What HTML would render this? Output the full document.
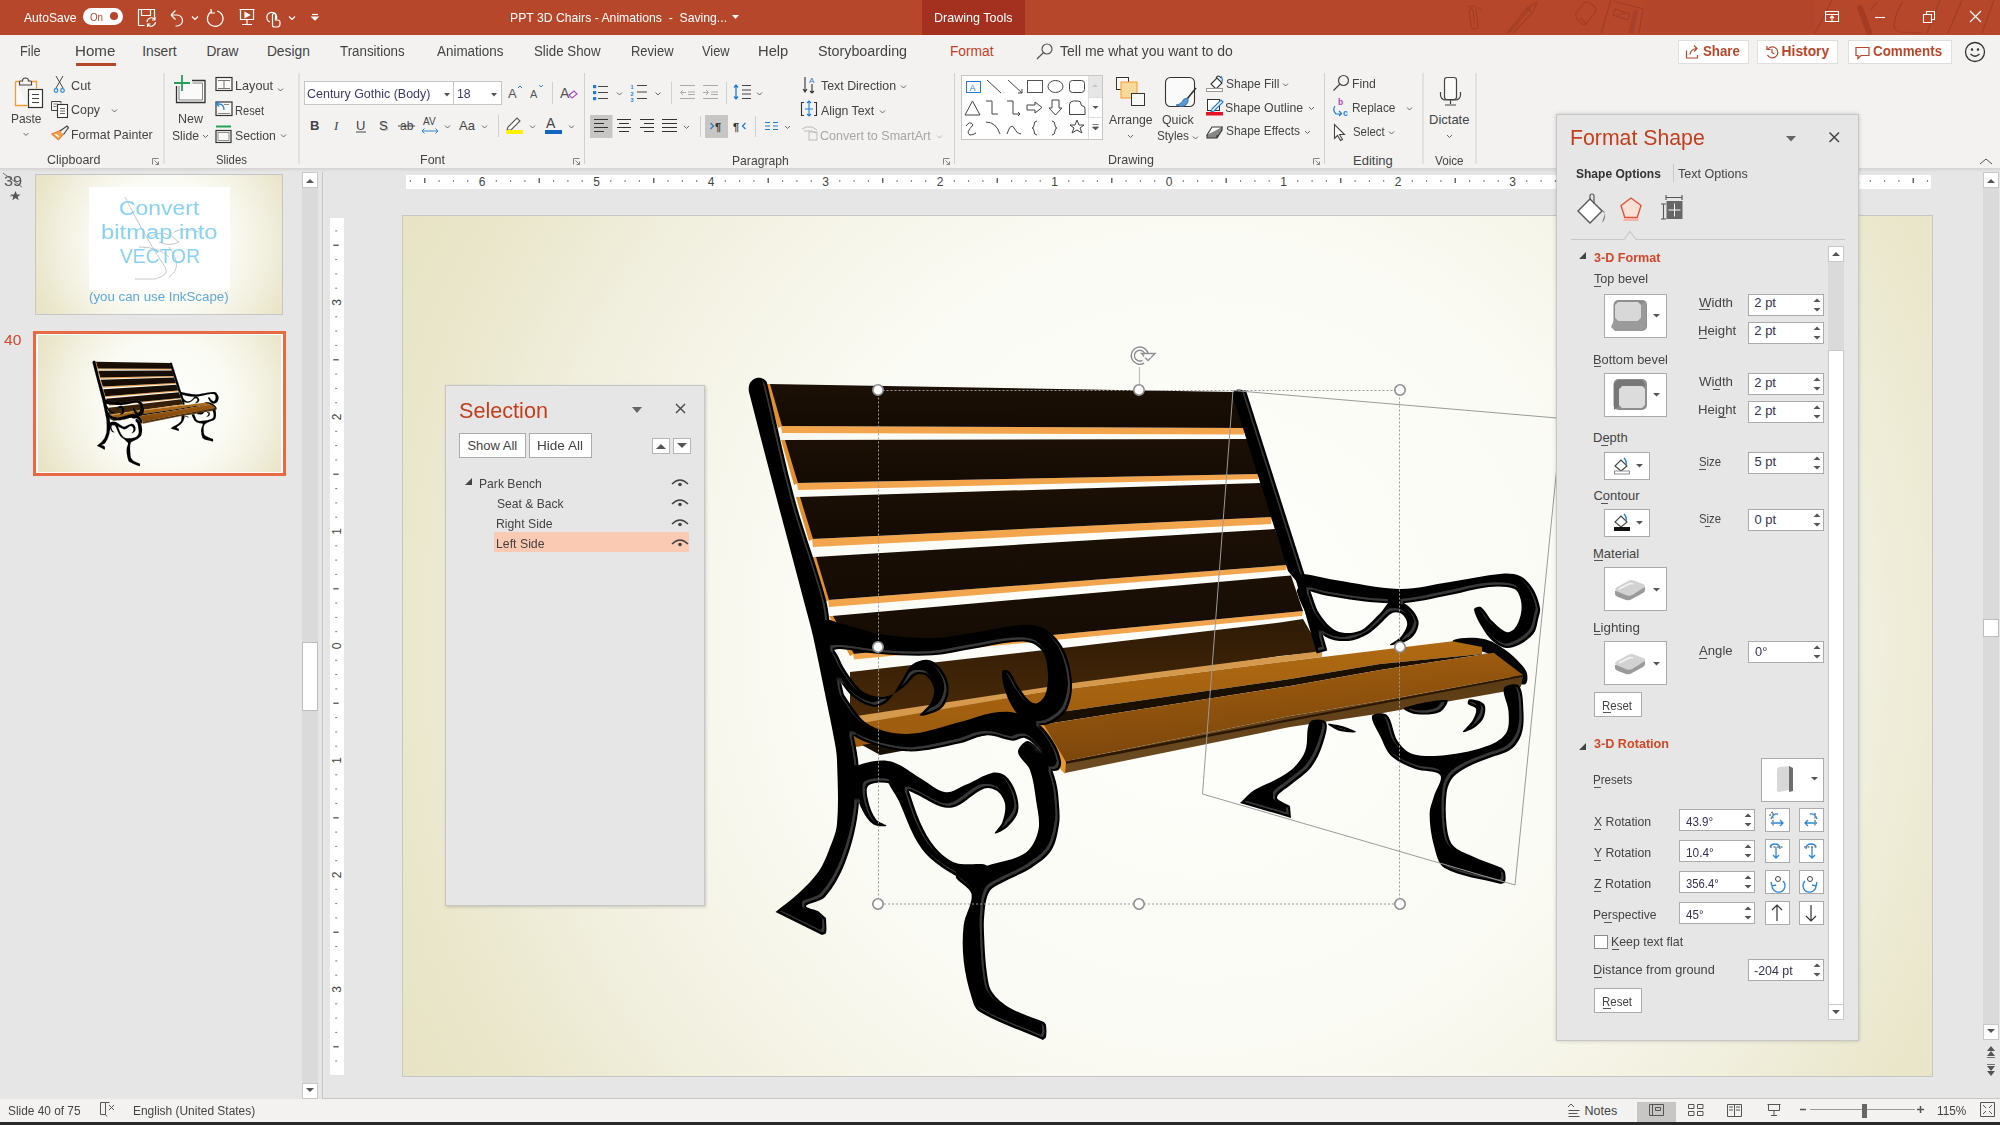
<!DOCTYPE html>
<html><head><meta charset="utf-8">
<style>
*{box-sizing:border-box;margin:0;padding:0}
html,body{width:2000px;height:1125px;overflow:hidden;background:#E6E6E6;font-family:"Liberation Sans",sans-serif;color:#444;position:relative}
.a{position:absolute;white-space:nowrap}
svg.a{overflow:visible}
</style></head><body>
<!-- p_title -->
<div class="a" style="left:0;top:0;width:2000px;height:35px;background:#B7472A"></div><div class="a" style="left:922px;top:0;width:103px;height:35px;background:#A4301F"></div><div class="a" style="left:1644px;top:0;width:170px;height:31px;background:#B2452A"></div><svg class="a" style="left:0;top:0" width="2000" height="35" fill="none" stroke="#A13D25" stroke-width="1.2">
<path d="M1472 9 q-2 -3 1 -3 q3 0 3 3 l2 16 q0 4 -3 4 q-4 0 -4 -4 l-2 -14 q0 -2 2 -2 q2 0 2 2 l1.5 12"/>
<path d="M1467 7 l3 -1 M1478 8 l4 2"/>
<path d="M1537 2 l-4 10 l-20 21 M1537 2 l-10 6 l-20 25 M1531 7 l-22 26 M1527 8 l4 4"/>
<path d="M1576 13 l8 -10 q3 -2 6 0 l5 4 q2 2 0 5 l-8 11 q-2 2 -5 1 l-5 -5 q-2 -3 -1 -6z M1580 18 l7 6"/>
<path d="M1611 0 l-10 33 M1613 1 l30 8 l-4 24 M1615 9 l15 5 l-2 6 l-15 -5z M1617 15 l10 -2"/>
<path d="M1636 10 l-5 23" stroke-width="5" stroke="#A8402A"/>
<path d="M1832 0 l-17 33 M1903 2 q-7 8 -9 23 q0 5 6 7 l22 1 M1940 0 l-13 33 M1962 0 l-14 33 M1994 0 l-12 33 M1877 2 l-6 8"/>
<path d="M1860 8 l9 24" stroke-width="6" stroke="#A53B22" stroke-linecap="round"/>
</svg><div class="a" style="left:24.0px;top:10.5px;font-size:13.5px;line-height:1;color:#fff;transform:scaleX(0.898);transform-origin:0 0;">AutoSave</div>
<div class="a" style="left:83px;top:8px;width:40px;height:17px;border-radius:9px;background:#fff"></div><div class="a" style="left:89.6px;top:12.1px;font-size:10.5px;line-height:1;color:#B7472A;transform:scaleX(0.933);transform-origin:0 0;">On</div>
<div class="a" style="left:110px;top:12px;width:8px;height:8px;border-radius:4px;background:#B7472A"></div><svg class="a" style="left:130px;top:0" width="200" height="35" fill="none" stroke="#fff" stroke-width="1.2">
<path d="M8.5 25.5 v-16 h16 v8 M8.5 25.5 h6 M11.5 9.5 v6 h9 v-6"/>
<path d="M17 22 a4.5 4.5 0 0 1 8 -2.5 M25 17 v3 h-3 M25.5 22 a4.5 4.5 0 0 1 -8 2.5 M17.5 27 v-3 h3"/>
<path d="M41 15 h6 a5.5 5.5 0 0 1 0 11 h-1.5 M41 15 l4.5 -4.5 M41 15 l4.5 4.5"/>
<path d="M62 16.5 l3 3 l3 -3"/>
<path d="M82 11.5 a7.8 7.8 0 1 0 5 -0.5 M81 9 v4 h4"/>
<path d="M109.5 9.5 h15 M110.5 9.5 v10 h13 v-10 M117 19.5 v5 M112 24.5 h10"/>
<path d="M115 12.5 v5 l4.5 -2.5 z" fill="#fff"/>
<path d="M140 22 a5 5 0 1 1 6.5 -3 M142.5 25 v-10 a1.5 1.5 0 0 1 3 0 v5 h2 a2.5 2.5 0 0 1 2.5 2.5 v1.5 a3 3 0 0 1 -3 3 h-2.5 a2 2 0 0 1 -2 -2z"/>
<path d="M159 16.5 l3 3 l3 -3"/>
<path d="M182 14.5 h6"/><path d="M182 17 h6 l-3 3z" fill="#fff"/>
</svg><div class="a" style="left:510.0px;top:10.5px;font-size:13.5px;line-height:1;color:#fff;transform:scaleX(0.905);transform-origin:0 0;white-space:pre;">PPT 3D Chairs - Animations  -  Saving...</div>
<svg class="a" style="left:731px;top:14px" width="10" height="6"><path d="M1 1 h7 l-3.5 4 z" fill="#fff"/></svg><div class="a" style="left:934.0px;top:11.0px;font-size:13px;line-height:1;color:#fff;transform:scaleX(0.964);transform-origin:0 0;">Drawing Tools</div>
<svg class="a" style="left:1820px;top:0" width="180" height="35" fill="none" stroke="#fff" stroke-width="1.1">
<path d="M5.5 11.5 h13 v10 h-13 z M5.5 14.5 h13 M12 21 v-5 M10 18 l2 -2 l2 2"/>
<path d="M55 17.5 h10"/>
<path d="M103.5 14.5 h8 v8 h-8 z M106.5 14.5 v-3 h8 v8 h-3"/>
<path d="M150 11 l11 11 M161 11 l-11 11"/>
</svg><div class="a" style="left:0;top:35px;width:2000px;height:134px;background:#F3F2F1"></div><div class="a" style="left:20.0px;top:45.3px;font-size:13.8px;line-height:1;color:#444;transform:scaleX(0.927);transform-origin:0 0;">File</div>
<div class="a" style="left:74.8px;top:45.3px;font-size:13.8px;line-height:1;color:#444;transform:scaleX(1.098);transform-origin:0 0;">Home</div>
<div class="a" style="left:142.2px;top:45.3px;font-size:13.8px;line-height:1;color:#444;">Insert</div>
<div class="a" style="left:206.4px;top:45.3px;font-size:13.8px;line-height:1;color:#444;">Draw</div>
<div class="a" style="left:266.9px;top:45.3px;font-size:13.8px;line-height:1;color:#444;">Design</div>
<div class="a" style="left:339.7px;top:45.3px;font-size:13.8px;line-height:1;color:#444;transform:scaleX(0.966);transform-origin:0 0;">Transitions</div>
<div class="a" style="left:436.5px;top:45.3px;font-size:13.8px;line-height:1;color:#444;transform:scaleX(0.974);transform-origin:0 0;">Animations</div>
<div class="a" style="left:534.4px;top:45.3px;font-size:13.8px;line-height:1;color:#444;transform:scaleX(0.964);transform-origin:0 0;">Slide Show</div>
<div class="a" style="left:630.5px;top:45.3px;font-size:13.8px;line-height:1;color:#444;transform:scaleX(0.940);transform-origin:0 0;">Review</div>
<div class="a" style="left:702.4px;top:45.3px;font-size:13.8px;line-height:1;color:#444;transform:scaleX(0.929);transform-origin:0 0;">View</div>
<div class="a" style="left:757.8px;top:45.3px;font-size:13.8px;line-height:1;color:#444;transform:scaleX(1.067);transform-origin:0 0;">Help</div>
<div class="a" style="left:817.9px;top:45.3px;font-size:13.8px;line-height:1;color:#444;transform:scaleX(1.037);transform-origin:0 0;">Storyboarding</div>
<div class="a" style="left:949.9px;top:45.3px;font-size:13.8px;line-height:1;color:#C43E1C;">Format</div>
<div class="a" style="left:76px;top:63px;width:40px;height:3px;background:#B7472A"></div><svg class="a" style="left:1035px;top:42px" width="20" height="20" fill="none" stroke="#555" stroke-width="1.2"><circle cx="12" cy="7" r="5"/><path d="M8.5 10.5 L2 17"/></svg><div class="a" style="left:1059.7px;top:45.3px;font-size:13.8px;line-height:1;color:#444;transform:scaleX(1.015);transform-origin:0 0;">Tell me what you want to do</div>
<div class="a" style="left:1678px;top:40px;width:71px;height:24px;background:#fff;border:1px solid #E1DFDD"></div><div class="a" style="left:1757px;top:40px;width:81px;height:24px;background:#fff;border:1px solid #E1DFDD"></div><div class="a" style="left:1848px;top:40px;width:104px;height:24px;background:#fff;border:1px solid #E1DFDD"></div><div class="a" style="left:1702.6px;top:45.3px;font-size:13.8px;line-height:1;color:#B7472A;font-weight:bold;transform:scaleX(0.961);transform-origin:0 0;">Share</div>
<div class="a" style="left:1781.6px;top:45.3px;font-size:13.8px;line-height:1;color:#B7472A;font-weight:bold;">History</div>
<div class="a" style="left:1872.5px;top:45.3px;font-size:13.8px;line-height:1;color:#B7472A;font-weight:bold;transform:scaleX(0.969);transform-origin:0 0;">Comments</div>
<svg class="a" style="left:1680px;top:40px" width="280" height="24" fill="none" stroke="#B7472A" stroke-width="1.2">
<path d="M6.5 10.5 v7.5 h11 v-3 M10 14.5 q1 -6 7 -6 M14 5.5 l3 3 l-3 3"/>
<path d="M88 9 a5.5 5.5 0 1 1 -0.5 6 M87 6 v3.5 h3.5 M92 9 v3.5 l2.5 1.5"/>
<path d="M176 7.5 h13 v8 h-8 l-3 3 v-3 h-2 z"/>
</svg><svg class="a" style="left:1962px;top:40px" width="26" height="24" fill="none" stroke="#333" stroke-width="1.3"><circle cx="13" cy="12" r="9.5"/><circle cx="10" cy="9.5" r="0.6" fill="#333"/><circle cx="16" cy="9.5" r="0.6" fill="#333"/><path d="M8.5 14 q4.5 4.5 9 0"/></svg>
<!-- p_ribbon -->
<div class="a" style="left:11.0px;top:112.6px;font-size:12.8px;line-height:1;color:#444;transform:scaleX(0.932);transform-origin:0 0;">Paste</div>
<div class="a" style="left:70.9px;top:78.8px;font-size:13px;line-height:1;color:#444;transform:scaleX(0.974);transform-origin:0 0;">Cut</div>
<div class="a" style="left:70.9px;top:103.4px;font-size:13px;line-height:1;color:#444;transform:scaleX(0.959);transform-origin:0 0;">Copy</div>
<div class="a" style="left:70.5px;top:128.1px;font-size:13px;line-height:1;color:#444;transform:scaleX(0.950);transform-origin:0 0;">Format Painter</div>
<div class="a" style="left:46.9px;top:153.0px;font-size:13px;line-height:1;color:#444;transform:scaleX(0.960);transform-origin:0 0;">Clipboard</div>
<div class="a" style="left:178.0px;top:112.2px;font-size:13px;line-height:1;color:#444;transform:scaleX(0.959);transform-origin:0 0;">New</div>
<div class="a" style="left:171.5px;top:129.4px;font-size:13px;line-height:1;color:#444;transform:scaleX(0.937);transform-origin:0 0;">Slide</div>
<div class="a" style="left:235.0px;top:78.8px;font-size:13px;line-height:1;color:#444;transform:scaleX(0.976);transform-origin:0 0;">Layout</div>
<div class="a" style="left:235.1px;top:103.5px;font-size:13px;line-height:1;color:#444;transform:scaleX(0.853);transform-origin:0 0;">Reset</div>
<div class="a" style="left:234.9px;top:128.6px;font-size:13px;line-height:1;color:#444;transform:scaleX(0.942);transform-origin:0 0;">Section</div>
<div class="a" style="left:215.5px;top:152.9px;font-size:13px;line-height:1;color:#444;transform:scaleX(0.872);transform-origin:0 0;">Slides</div>
<div class="a" style="left:304px;top:81px;width:198px;height:24px;background:#fff;border:1px solid #C8C6C4"></div><div class="a" style="left:453px;top:82px;width:1px;height:22px;background:#C8C6C4"></div><div class="a" style="left:306.9px;top:86.5px;font-size:13px;line-height:1;color:#3B3B6A;transform:scaleX(0.960);transform-origin:0 0;">Century Gothic (Body)</div>
<div class="a" style="left:456.6px;top:86.5px;font-size:13px;line-height:1;color:#3B3B6A;transform:scaleX(0.943);transform-origin:0 0;">18</div>
<div class="a" style="left:420.0px;top:153.1px;font-size:13px;line-height:1;color:#444;transform:scaleX(0.964);transform-origin:0 0;">Font</div>
<div class="a" style="left:820.8px;top:78.7px;font-size:13px;line-height:1;color:#444;transform:scaleX(0.953);transform-origin:0 0;">Text Direction</div>
<div class="a" style="left:821.0px;top:103.8px;font-size:13px;line-height:1;color:#444;transform:scaleX(0.946);transform-origin:0 0;">Align Text</div>
<div class="a" style="left:820.4px;top:128.9px;font-size:13px;line-height:1;color:#A6A6A6;transform:scaleX(0.964);transform-origin:0 0;">Convert to SmartArt</div>
<div class="a" style="left:732.0px;top:153.7px;font-size:13px;line-height:1;color:#444;transform:scaleX(0.935);transform-origin:0 0;">Paragraph</div>
<div class="a" style="left:961px;top:75px;width:142px;height:65px;background:#fff;border:1px solid #C8C6C4"></div><div class="a" style="left:1088px;top:76px;width:1px;height:63px;background:#E1DFDD"></div><div class="a" style="left:1089px;top:76px;width:13px;height:21px;background:#E6E6E6"></div><div class="a" style="left:1109.0px;top:112.9px;font-size:13px;line-height:1;color:#444;transform:scaleX(0.942);transform-origin:0 0;">Arrange</div>
<div class="a" style="left:1162.4px;top:112.9px;font-size:13px;line-height:1;color:#444;transform:scaleX(0.950);transform-origin:0 0;">Quick</div>
<div class="a" style="left:1156.5px;top:128.9px;font-size:13px;line-height:1;color:#444;transform:scaleX(0.902);transform-origin:0 0;">Styles</div>
<div class="a" style="left:1225.5px;top:76.8px;font-size:13px;line-height:1;color:#444;transform:scaleX(0.923);transform-origin:0 0;">Shape Fill</div>
<div class="a" style="left:1225.4px;top:100.5px;font-size:13px;line-height:1;color:#444;transform:scaleX(0.948);transform-origin:0 0;">Shape Outline</div>
<div class="a" style="left:1225.5px;top:124.3px;font-size:13px;line-height:1;color:#444;transform:scaleX(0.916);transform-origin:0 0;">Shape Effects</div>
<div class="a" style="left:1108.0px;top:153.4px;font-size:13px;line-height:1;color:#444;transform:scaleX(0.962);transform-origin:0 0;">Drawing</div>
<div class="a" style="left:1352.0px;top:77.4px;font-size:13px;line-height:1;color:#444;transform:scaleX(0.940);transform-origin:0 0;">Find</div>
<div class="a" style="left:1352.1px;top:101.4px;font-size:13px;line-height:1;color:#444;transform:scaleX(0.911);transform-origin:0 0;">Replace</div>
<div class="a" style="left:1352.5px;top:125.4px;font-size:13px;line-height:1;color:#444;transform:scaleX(0.875);transform-origin:0 0;">Select</div>
<div class="a" style="left:1353.0px;top:153.5px;font-size:13px;line-height:1;color:#444;">Editing</div>
<div class="a" style="left:1429.0px;top:112.8px;font-size:13px;line-height:1;color:#444;">Dictate</div>
<div class="a" style="left:1434.9px;top:153.5px;font-size:13px;line-height:1;color:#444;transform:scaleX(0.899);transform-origin:0 0;">Voice</div>
<svg class="a" style="left:0;top:0" width="2000" height="170"><path d="M164 73 V164" stroke="#D2D0CE" stroke-width="1"/><path d="M299 73 V164" stroke="#D2D0CE" stroke-width="1"/><path d="M584.5 73 V164" stroke="#D2D0CE" stroke-width="1"/><path d="M954.5 73 V164" stroke="#D2D0CE" stroke-width="1"/><path d="M1324.5 73 V164" stroke="#D2D0CE" stroke-width="1"/><path d="M1423 73 V164" stroke="#D2D0CE" stroke-width="1"/><path d="M1476 73 V164" stroke="#D2D0CE" stroke-width="1"/><path d="M152.5 164.5 v-6 h6 M154.5 160.5 l4 4 M158.5 161.5 v3 h-3" stroke="#777" fill="none" stroke-width="0.9"/><path d="M573.5 164.5 v-6 h6 M575.5 160.5 l4 4 M579.5 161.5 v3 h-3" stroke="#777" fill="none" stroke-width="0.9"/><path d="M943.5 164.5 v-6 h6 M945.5 160.5 l4 4 M949.5 161.5 v3 h-3" stroke="#777" fill="none" stroke-width="0.9"/><path d="M1313.5 164.5 v-6 h6 M1315.5 160.5 l4 4 M1319.5 161.5 v3 h-3" stroke="#777" fill="none" stroke-width="0.9"/><path d="M15.5 81.5 h5 M30.5 81.5 h6 v7 M15.5 81.5 v24 h12" stroke="#F39C30" fill="#FAFAFA" stroke-width="1.3"/><path d="M19.5 85 v-3 a1 1 0 0 1 1 -1 h2 a3 3 0 0 1 6 0 h2 a1 1 0 0 1 1 1 v3 z" stroke="#444" fill="#F3F2F1" stroke-width="1.1"/><rect x="28.5" y="89.5" width="14" height="18" fill="#fff" stroke="#333" stroke-width="1.2"/><path d="M32 94.5 h7 M32 98.5 h7 M32 102.5 h7" stroke="#444" stroke-width="1"/><path d="M23.5 133 l2.5 2.5 l2.5 -2.5" stroke="#666" fill="none" stroke-width="1"/><path d="M56 76 l7 12 M63 76 l-7 12" stroke="#444" stroke-width="1" fill="none"/><circle cx="56" cy="90.5" r="1.8" stroke="#2B88D8" fill="none" stroke-width="1.2"/><circle cx="62.5" cy="90.5" r="1.8" stroke="#2B88D8" fill="none" stroke-width="1.2"/><path d="M60 110.5 h-8.5 v-9 h9.5 v2" stroke="#444" fill="none" stroke-width="1"/><rect x="57.5" y="104.5" width="10" height="13" fill="#fff" stroke="#333" stroke-width="1.1"/><path d="M60 108.5 h5 M60 111 h5 M60 113.5 h5" stroke="#555" stroke-width="0.9"/><path d="M53.5 104 h4 M53.5 106.5 h3" stroke="#666" stroke-width="0.8"/><path d="M112 109.5 l2.5 2.5 l2.5 -2.5" stroke="#666" fill="none" stroke-width="1"/><path d="M51.5 134 l7 6 l6 -7 l-3 -3 z" fill="#F6A04C" stroke="#E8761E" stroke-width="1"/><path d="M55 134 l4 3" stroke="#fff" stroke-width="1.5"/><path d="M60 131 l7 -5 l1.5 1.5 l-5 7" stroke="#444" fill="#F3F2F1" stroke-width="1.1"/><path d="M176.5 86 v16.5 h28.5 v-22 h-13" stroke="#333" fill="#FAFAFA" stroke-width="1.3"/><path d="M179 86 v14 h23.5 v-17 h-10" stroke="#777" fill="none" stroke-width="0.9"/><path d="M174 83 h16 M182 75 v16" stroke="#22A356" stroke-width="1.8"/><path d="M203 135 l2.5 2.5 l2.5 -2.5" stroke="#666" fill="none" stroke-width="1"/><rect x="216" y="77.5" width="16" height="13" fill="#F8F8F8" stroke="#333" stroke-width="1.2"/><path d="M218 80.5 h12 M218 88.5 h12 M224 80.5 v8" stroke="#777" stroke-width="1"/><rect x="216" y="102" width="16" height="13.5" fill="#F8F8F8" stroke="#333" stroke-width="1.2"/><path d="M218 113.5 h12 M224 104.5 h5" stroke="#888" stroke-width="1"/><path d="M224 110 q0 -6 -5 -6 h-2 M219 101.5 l-2.5 2.5 l2.5 2.5" stroke="#2B88D8" fill="none" stroke-width="1.3"/><path d="M216 126.5 h15" stroke="#22A356" stroke-width="2"/><rect x="216" y="130.5" width="15" height="12" fill="#F8F8F8" stroke="#333" stroke-width="1.2"/><rect x="218" y="132.5" width="11" height="8" fill="none" stroke="#777" stroke-width="0.8"/><path d="M278 88.5 l2.5 2.5 l2.5 -2.5" stroke="#666" fill="none" stroke-width="1"/><path d="M281 134.5 l2.5 2.5 l2.5 -2.5" stroke="#666" fill="none" stroke-width="1"/><path d="M444 93 h6 l-3 3.5z M491 93 h6 l-3 3.5z" fill="#555"/><text x="508" y="98" font-size="13" fill="#555" font-family="Liberation Sans">A</text><path d="M518 88 l2 -2 l2 2" stroke="#2B88D8" fill="none" stroke-width="1"/><text x="530" y="98" font-size="11" fill="#555" font-family="Liberation Sans">A</text><path d="M539 85 l2 2 l2 -2" stroke="#2B88D8" fill="none" stroke-width="1"/><path d="M552.5 82 V104" stroke="#D2D0CE"/><text x="560" y="98" font-size="14" fill="#555" font-family="Liberation Sans">A</text><path d="M569 95 l5 -4 l3 3 l-5 4 z" fill="#fff" stroke="#B146C2" stroke-width="1.2"/><text x="310" y="129.5" font-size="13" font-weight="bold" fill="#444" font-family="Liberation Sans">B</text><text x="334" y="129.5" font-size="13" font-style="italic" fill="#444" font-family="Liberation Serif">I</text><text x="356" y="129.5" font-size="13" fill="#444" font-family="Liberation Sans">U</text><path d="M356 132 h10" stroke="#444"/><text x="380" y="130.5" font-size="13" fill="#bbb" font-family="Liberation Sans">S</text><text x="379" y="129.5" font-size="13" fill="#444" font-family="Liberation Sans">S</text><text x="400" y="130" font-size="12" fill="#444" font-family="Liberation Sans">ab</text><path d="M398 126 h17" stroke="#444"/><text x="423" y="125" font-size="10" fill="#444" font-family="Liberation Sans">AV</text><path d="M422 131 h16 M424.5 128.5 l-2.5 2.5 l2.5 2.5 M435.5 128.5 l2.5 2.5 l-2.5 2.5" stroke="#2B88D8" fill="none" stroke-width="1"/><path d="M445 125.5 l2.5 2.5 l2.5 -2.5" stroke="#666" fill="none" stroke-width="1"/><text x="459" y="130" font-size="13" fill="#444" font-family="Liberation Sans">Aa</text><path d="M482 125.5 l2.5 2.5 l2.5 -2.5" stroke="#666" fill="none" stroke-width="1"/><path d="M498.5 115 V137" stroke="#D2D0CE"/><path d="M508 127 l9 -9 l3 3 l-9 9 l-4 0z" fill="#fff" stroke="#555" stroke-width="1.1"/><rect x="506" y="130" width="17" height="4" fill="#FFF100"/><path d="M530 125.5 l2.5 2.5 l2.5 -2.5" stroke="#666" fill="none" stroke-width="1"/><text x="546" y="128" font-size="14" fill="#444" font-family="Liberation Sans">A</text><rect x="545" y="130" width="17" height="4" fill="#1565C0"/><path d="M569 125.5 l2.5 2.5 l2.5 -2.5" stroke="#666" fill="none" stroke-width="1"/><rect x="593" y="85" width="3.2" height="3.2" fill="#1E7FD8"/><path d="M598 86.5 h10" stroke="#444" stroke-width="1"/><rect x="593" y="91" width="3.2" height="3.2" fill="#1E7FD8"/><path d="M598 92.5 h10" stroke="#444" stroke-width="1"/><rect x="593" y="97" width="3.2" height="3.2" fill="#1E7FD8"/><path d="M598 98.5 h10" stroke="#444" stroke-width="1"/><path d="M617 92.5 l2.5 2.5 l2.5 -2.5" stroke="#666" fill="none" stroke-width="1"/><text x="630.5" y="89" font-size="5.5" fill="#1E7FD8" font-family="Liberation Sans" font-weight="bold">1</text><text x="630.5" y="95.5" font-size="5.5" fill="#1E7FD8" font-family="Liberation Sans" font-weight="bold">2</text><text x="630.5" y="102" font-size="5.5" fill="#1E7FD8" font-family="Liberation Sans" font-weight="bold">3</text><path d="M637 85.5 h10 M637 92 h10 M637 98.5 h10" stroke="#444" stroke-width="1"/><path d="M655.5 92.5 l2.5 2.5 l2.5 -2.5" stroke="#666" fill="none" stroke-width="1"/><path d="M671.5 82 V104 M726.5 82 V104" stroke="#D2D0CE"/><path d="M680 85.5 h15 M688 92 h7 M688 94.5 h7 M680 98.5 h15 M681 92.5 h5 M683 90 l-2.5 2.5 l2.5 2.5" stroke="#AAA" fill="none" stroke-width="1"/><path d="M703 85.5 h15 M711 92 h7 M711 94.5 h7 M703 98.5 h15 M703 92.5 h5 M706 90 l2.5 2.5 l-2.5 2.5" stroke="#AAA" fill="none" stroke-width="1"/><path d="M736 85 v14 M734 87.5 l2 -2.5 l2 2.5 M734 96.5 l2 2.5 l2 -2.5" stroke="#1E7FD8" fill="none" stroke-width="1.3"/><path d="M742 85.5 h9 M742 90 h9 M742 94 h9 M742 98.5 h9" stroke="#444" stroke-width="1"/><path d="M757 92.5 l2.5 2.5 l2.5 -2.5" stroke="#666" fill="none" stroke-width="1"/><rect x="590" y="115" width="22.5" height="23" fill="#C8C6C4"/><rect x="705" y="115" width="23" height="23" fill="#C8C6C4"/><path d="M594 119.5 h14 M594 123.5 h10 M594 127.5 h14 M594 131.5 h10" stroke="#333" stroke-width="1"/><path d="M617 119.5 h14 M619 123.5 h10 M617 127.5 h14 M619 131.5 h10" stroke="#333" stroke-width="1"/><path d="M640 119.5 h14 M644 123.5 h10 M640 127.5 h14 M644 131.5 h10" stroke="#333" stroke-width="1"/><path d="M662 119.5 h15 M662 123.5 h15 M662 127.5 h15 M662 131.5 h15" stroke="#333" stroke-width="1"/><path d="M684 126 l2.5 2.5 l2.5 -2.5" stroke="#666" fill="none" stroke-width="1"/><path d="M700.5 116 V137 M755.5 116 V137" stroke="#D2D0CE"/><path d="M710.5 123 l3 3 l-3 3" stroke="#1E7FD8" fill="none" stroke-width="1.3"/><text x="715" y="131" font-size="11" fill="#333" font-family="Liberation Sans" font-weight="bold">¶</text><text x="733" y="131" font-size="11" fill="#333" font-family="Liberation Sans" font-weight="bold">¶</text><path d="M745.5 123 l-3 3 l3 3" stroke="#1E7FD8" fill="none" stroke-width="1.3"/><path d="M765 122.5 h5 M765 126 h5 M765 129.5 h5 M773 122.5 h5 M773 126 h5 M773 129.5 h5" stroke="#1E7FD8" stroke-width="1.2"/><path d="M785 126 l2.5 2.5 l2.5 -2.5" stroke="#666" fill="none" stroke-width="1"/><path d="M805 77 v15 M803 89 l2 3 l2 -3 M812 84 v9 M810 91 l2 2 l2 -2" stroke="#333" fill="none" stroke-width="1.1"/><text x="809" y="83" font-size="8" fill="#1E7FD8" font-family="Liberation Sans">A</text><path d="M804 102.5 h-2.5 v13 h2.5 M814 102.5 h2.5 v13 h-2.5" stroke="#333" fill="none" stroke-width="1.1"/><path d="M809 101 v15 M807 103 l2 -2 l2 2 M807 114 l2 2 l2 -2 M805 109 h8" stroke="#1E7FD8" fill="none" stroke-width="1.1"/><path d="M802 129 l4 -2 h6 l5 3 M804 131 h8 l4 2" stroke="#BBB" fill="none" stroke-width="1"/><rect x="809" y="132" width="8" height="8" fill="none" stroke="#BBB"/><path d="M901 85.5 l2.5 2.5 l2.5 -2.5" stroke="#666" fill="none" stroke-width="1"/><path d="M880 110.5 l2.5 2.5 l2.5 -2.5" stroke="#666" fill="none" stroke-width="1"/><path d="M937 135.5 l2.5 2.5 l2.5 -2.5" stroke="#BBB" fill="none" stroke-width="1"/><path d="M1092 87 l3 -3 l3 3z" fill="#C8C8C8"/><path d="M1089 97.5 h13 M1089 117.5 h13" stroke="#E1DFDD"/><path d="M1092.5 106 h6 l-3 3z" fill="#555"/><path d="M1092.5 124.5 h6 M1092.5 127 h6 l-3 3z" stroke="#555" fill="#555" stroke-width="0.8"/><g stroke="#444" fill="none" stroke-width="1"><rect x="966.5" y="81.5" width="14" height="11" stroke="#1E7FD8"/><text x="969.5" y="91" font-size="9" fill="#1E7FD8" stroke="none" font-family="Liberation Sans">A</text><path d="M987 80 l14 13 M1008 80 l14 13 M1022 93 v-4 M1022 93 h-4"/><rect x="1027.5" y="80.5" width="15" height="12" stroke="#555"/><ellipse cx="1055.5" cy="86.5" rx="7.5" ry="6"/><rect x="1069.5" y="80.5" width="15" height="12" rx="3"/><path d="M965 115 l7.5 -14 l7.5 14 z M986 101 h6 v13 h6 M1007 101 h6 v13 h7 M1018 112 l2 2 l-2 2"/><path d="M1027 105 h8 v-3 l7 5.5 l-7 5.5 v-3 h-8 z M1052 100 h7 v8 h3 l-6.5 7 l-6.5 -7 h3 z M1069.5 114.5 v-9.5 q0 -4 4 -4 h4.5 q3 0 3 3 q0 2 2 2 q2 0 2 3 v5.5 z"/><path d="M966 126 q4 -6 7 -1 q-8 8 -3 10 q3 0 6 -2 M986 122 q10 0 14 12 M1007 134 q4 -12 7 -6 q3 6 7 6 M1037 121 q-3 0 -3 4 q0 3 -2 3 q2 0 2 3 q0 4 3 4 M1052 121 q3 0 3 4 q0 3 2 3 q-2 0 -2 3 q0 4 -3 4 M1077 120 l2 5 h5 l-4 3 l2 5 l-5 -3 l-5 3 l2 -5 l-4 -3 h5 z"/></g><rect x="1116.5" y="77.5" width="12" height="12" fill="#F8F8F8" stroke="#333"/><rect x="1121" y="82" width="16" height="16" fill="#F9D89C" stroke="#F39C30"/><rect x="1131.5" y="93.5" width="13" height="12" fill="#F8F8F8" stroke="#333"/><path d="M1128 135 l2.5 2.5 l2.5 -2.5" stroke="#666" fill="none" stroke-width="1"/><rect x="1165.5" y="77.5" width="29" height="29" rx="5" fill="#FAFAFA" stroke="#333" stroke-width="1.1"/><path d="M1196 88 l-9 11" stroke="#333" stroke-width="1.6"/><path d="M1188 98 q-5 0 -6 4 q-3 3 -6 3 q6 3 10 0 q3 -3 2 -7z" fill="#5B9BD5" stroke="#2B6CB0" stroke-width="0.8"/><path d="M1193 136.5 l2.5 2.5 l2.5 -2.5" stroke="#666" fill="none" stroke-width="1"/><path d="M1211 84 l6 -6 l5 5 l-6 6 z M1216 78 q2 -4 5 0" stroke="#333" fill="#fff" stroke-width="1.1"/><path d="M1221 76 q2 3 1 6" stroke="#1E7FD8" fill="none" stroke-width="1.3"/><rect x="1206.5" y="88.5" width="16" height="3" fill="#fff" stroke="#999"/><rect x="1207.5" y="99.5" width="12" height="11" fill="#fff" stroke="#333"/><path d="M1212 109 l9 -9 l2 2 l-9 9 l-3 1z" fill="#fff" stroke="#1E7FD8" stroke-width="1.2"/><rect x="1206" y="112" width="17" height="3.5" fill="#E81123"/><path d="M1207 135 l5 -8 h10 l-5 8 z" fill="#fff" stroke="#333" stroke-width="1.1"/><path d="M1207 135 v3 h10 l5 -8 v-3 M1217 135 v3" fill="#888" stroke="#333" stroke-width="1.1"/><path d="M1283 83.5 l2.5 2.5 l2.5 -2.5" stroke="#666" fill="none" stroke-width="1"/><path d="M1309 107 l2.5 2.5 l2.5 -2.5" stroke="#666" fill="none" stroke-width="1"/><path d="M1305 131 l2.5 2.5 l2.5 -2.5" stroke="#666" fill="none" stroke-width="1"/><circle cx="1343.5" cy="80.5" r="5" fill="none" stroke="#444" stroke-width="1.2"/><path d="M1340 84 l-6.5 6.5" stroke="#444" stroke-width="1.3"/><text x="1338" y="105" font-size="8.5" fill="#B146C2" font-family="Liberation Sans" font-weight="bold">b</text><text x="1343" y="116" font-size="8.5" fill="#1E7FD8" font-family="Liberation Sans" font-weight="bold">c</text><path d="M1335 106 q-3 4 1 8 h5 M1339 111 l2.5 2.5 l-2.5 2.5" stroke="#1E7FD8" fill="none" stroke-width="1.2"/><path d="M1334.5 124.5 v14 l3 -3 l3 5 l2 -1 l-3 -5 h5 z" fill="#fff" stroke="#444" stroke-width="1.1"/><path d="M1407 107.5 l2.5 2.5 l2.5 -2.5" stroke="#666" fill="none" stroke-width="1"/><path d="M1389 131.5 l2.5 2.5 l2.5 -2.5" stroke="#666" fill="none" stroke-width="1"/><rect x="1444.5" y="77.5" width="12" height="22" rx="2.5" fill="#FAFAFA" stroke="#444" stroke-width="1.2"/><path d="M1440.5 92 v3 a5 5 0 0 0 5 5 h10 a5 5 0 0 0 5 -5 v-3 M1450.5 100 v4 M1445 105 h11" stroke="#444" fill="none" stroke-width="1.2"/><path d="M1447 135 l2.5 2.5 l2.5 -2.5" stroke="#666" fill="none" stroke-width="1"/><path d="M1980 164 l6 -5 l6 5" stroke="#555" fill="none" stroke-width="1"/></svg><div class="a" style="left:0;top:168px;width:2000px;height:4px;background:linear-gradient(#D4D3D2,#E6E6E6)"></div>
<!-- p_left -->
<div class="a" style="left:302px;top:172px;width:16px;height:927px;background:#DADADA"></div><div class="a" style="left:302px;top:172px;width:16px;height:16px;background:#fff;border:1px solid #C8C8C8"></div><div class="a" style="left:302px;top:1083px;width:16px;height:16px;background:#fff;border:1px solid #C8C8C8"></div><div class="a" style="left:302px;top:642px;width:16px;height:69px;background:#fff;border:1px solid #BDBDBD"></div><svg class="a" style="left:302px;top:172px" width="16" height="926"><path d="M4 11 h8 l-4 -4z M4 916 h8 l-4 4z" fill="#555"/></svg><div class="a" style="left:322px;top:172px;width:1px;height:927px;background:#C6C6C6"></div><div class="a" style="left:3.9px;top:172.8px;font-size:15px;line-height:1;color:#555;transform:scaleX(1.093);transform-origin:0 0;">39</div>
<svg class="a" style="left:0;top:168px" width="30" height="40"><path d="M3 5 l19 14" stroke="#666" stroke-width="0.9"/><path d="M15.5 23 l1.5 3.5 h3.5 l-2.8 2.2 l1 3.6 l-3.2 -2.2 l-3.2 2.2 l1 -3.6 l-2.8 -2.2 h3.5z" fill="#555"/><path d="M10 28 h2" stroke="#777" stroke-width="0.8"/></svg><div class="a" style="left:3.7px;top:332.2px;font-size:15px;line-height:1;color:#D24726;transform:scaleX(1.043);transform-origin:0 0;">40</div>
<div class="a" style="left:35px;top:174px;width:248px;height:141px;border:1px solid #C6C6C6;background:radial-gradient(circle at 127px 67.5px,#FEFEFB 0px,#FBFBF5 64px,#F6F5E9 86px,#F0EEDC 108px,#EAE6CA 131px,#E6E1C0 151px)"></div><div class="a" style="left:89px;top:187px;width:141px;height:103px;background:#fff"></div><svg class="a" style="left:89px;top:187px" width="141" height="103" fill="none" stroke="#C8C8C8" stroke-width="1"><path d="M36 10 q20 40 40 70 q5 8 -10 12 h-20 M60 50 q15 -10 30 5 q-10 5 -20 0 M80 60 q15 20 0 30 M50 60 q20 0 30 10 M85 45 q10 -5 25 0"/></svg><div class="a" style="left:118.9px;top:197.6px;font-size:20px;line-height:1;color:#86D3F3;transform:scaleX(1.147);transform-origin:0 0;">Convert</div>
<div class="a" style="left:100.5px;top:221.6px;font-size:20px;line-height:1;color:#86D3F3;transform:scaleX(1.191);transform-origin:0 0;">bitmap into</div>
<div class="a" style="left:119.9px;top:245.5px;font-size:20px;line-height:1;color:#86D3F3;transform:scaleX(0.965);transform-origin:0 0;">VECTOR</div>
<div class="a" style="left:89.2px;top:291.2px;font-size:12.5px;line-height:1;color:#5FA8D8;transform:scaleX(1.063);transform-origin:0 0;">(you can use InkScape)</div>
<div class="a" style="left:33px;top:331px;width:253px;height:145px;border:3px solid #E86A45;background:#fff"></div><div class="a" style="left:37.5px;top:335px;width:243.5px;height:137px;background:radial-gradient(circle at 127px 67.5px,#FEFEFB 0px,#FBFBF5 64px,#F6F5E9 86px,#F0EEDC 108px,#EAE6CA 131px,#E6E1C0 151px)"></div><svg class="a" style="left:0;top:0" width="300" height="500"><g transform="translate(37.5 335) scale(0.1593) translate(-403 -216)"><use href="#bench"/></g></svg>
<!-- p_canvas -->
<svg class="a" style="left:0;top:0" width="2000" height="1125"><rect x="406" y="175" width="1525" height="14" fill="#fff"/><path d="M410.4 180 v2" stroke="#777" stroke-width="1"/><path d="M424.8 178 v5" stroke="#444" stroke-width="1.2"/><path d="M439.1 180 v2" stroke="#777" stroke-width="1"/><path d="M453.4 180 v2" stroke="#777" stroke-width="1"/><path d="M467.7 180 v2" stroke="#777" stroke-width="1"/><text x="482.0" y="186" font-size="12" fill="#444" text-anchor="middle" font-family="Liberation Sans">6</text><path d="M496.3 180 v2" stroke="#777" stroke-width="1"/><path d="M510.6 180 v2" stroke="#777" stroke-width="1"/><path d="M524.9 180 v2" stroke="#777" stroke-width="1"/><path d="M539.2 178 v5" stroke="#444" stroke-width="1.2"/><path d="M553.6 180 v2" stroke="#777" stroke-width="1"/><path d="M567.9 180 v2" stroke="#777" stroke-width="1"/><path d="M582.2 180 v2" stroke="#777" stroke-width="1"/><text x="596.5" y="186" font-size="12" fill="#444" text-anchor="middle" font-family="Liberation Sans">5</text><path d="M610.8 180 v2" stroke="#777" stroke-width="1"/><path d="M625.1 180 v2" stroke="#777" stroke-width="1"/><path d="M639.4 180 v2" stroke="#777" stroke-width="1"/><path d="M653.8 178 v5" stroke="#444" stroke-width="1.2"/><path d="M668.1 180 v2" stroke="#777" stroke-width="1"/><path d="M682.4 180 v2" stroke="#777" stroke-width="1"/><path d="M696.7 180 v2" stroke="#777" stroke-width="1"/><text x="711.0" y="186" font-size="12" fill="#444" text-anchor="middle" font-family="Liberation Sans">4</text><path d="M725.3 180 v2" stroke="#777" stroke-width="1"/><path d="M739.6 180 v2" stroke="#777" stroke-width="1"/><path d="M753.9 180 v2" stroke="#777" stroke-width="1"/><path d="M768.2 178 v5" stroke="#444" stroke-width="1.2"/><path d="M782.6 180 v2" stroke="#777" stroke-width="1"/><path d="M796.9 180 v2" stroke="#777" stroke-width="1"/><path d="M811.2 180 v2" stroke="#777" stroke-width="1"/><text x="825.5" y="186" font-size="12" fill="#444" text-anchor="middle" font-family="Liberation Sans">3</text><path d="M839.8 180 v2" stroke="#777" stroke-width="1"/><path d="M854.1 180 v2" stroke="#777" stroke-width="1"/><path d="M868.4 180 v2" stroke="#777" stroke-width="1"/><path d="M882.8 178 v5" stroke="#444" stroke-width="1.2"/><path d="M897.1 180 v2" stroke="#777" stroke-width="1"/><path d="M911.4 180 v2" stroke="#777" stroke-width="1"/><path d="M925.7 180 v2" stroke="#777" stroke-width="1"/><text x="940.0" y="186" font-size="12" fill="#444" text-anchor="middle" font-family="Liberation Sans">2</text><path d="M954.3 180 v2" stroke="#777" stroke-width="1"/><path d="M968.6 180 v2" stroke="#777" stroke-width="1"/><path d="M982.9 180 v2" stroke="#777" stroke-width="1"/><path d="M997.2 178 v5" stroke="#444" stroke-width="1.2"/><path d="M1011.6 180 v2" stroke="#777" stroke-width="1"/><path d="M1025.9 180 v2" stroke="#777" stroke-width="1"/><path d="M1040.2 180 v2" stroke="#777" stroke-width="1"/><text x="1054.5" y="186" font-size="12" fill="#444" text-anchor="middle" font-family="Liberation Sans">1</text><path d="M1068.8 180 v2" stroke="#777" stroke-width="1"/><path d="M1083.1 180 v2" stroke="#777" stroke-width="1"/><path d="M1097.4 180 v2" stroke="#777" stroke-width="1"/><path d="M1111.8 178 v5" stroke="#444" stroke-width="1.2"/><path d="M1126.1 180 v2" stroke="#777" stroke-width="1"/><path d="M1140.4 180 v2" stroke="#777" stroke-width="1"/><path d="M1154.7 180 v2" stroke="#777" stroke-width="1"/><text x="1169.0" y="186" font-size="12" fill="#444" text-anchor="middle" font-family="Liberation Sans">0</text><path d="M1183.3 180 v2" stroke="#777" stroke-width="1"/><path d="M1197.6 180 v2" stroke="#777" stroke-width="1"/><path d="M1211.9 180 v2" stroke="#777" stroke-width="1"/><path d="M1226.2 178 v5" stroke="#444" stroke-width="1.2"/><path d="M1240.6 180 v2" stroke="#777" stroke-width="1"/><path d="M1254.9 180 v2" stroke="#777" stroke-width="1"/><path d="M1269.2 180 v2" stroke="#777" stroke-width="1"/><text x="1283.5" y="186" font-size="12" fill="#444" text-anchor="middle" font-family="Liberation Sans">1</text><path d="M1297.8 180 v2" stroke="#777" stroke-width="1"/><path d="M1312.1 180 v2" stroke="#777" stroke-width="1"/><path d="M1326.4 180 v2" stroke="#777" stroke-width="1"/><path d="M1340.8 178 v5" stroke="#444" stroke-width="1.2"/><path d="M1355.1 180 v2" stroke="#777" stroke-width="1"/><path d="M1369.4 180 v2" stroke="#777" stroke-width="1"/><path d="M1383.7 180 v2" stroke="#777" stroke-width="1"/><text x="1398.0" y="186" font-size="12" fill="#444" text-anchor="middle" font-family="Liberation Sans">2</text><path d="M1412.3 180 v2" stroke="#777" stroke-width="1"/><path d="M1426.6 180 v2" stroke="#777" stroke-width="1"/><path d="M1440.9 180 v2" stroke="#777" stroke-width="1"/><path d="M1455.2 178 v5" stroke="#444" stroke-width="1.2"/><path d="M1469.6 180 v2" stroke="#777" stroke-width="1"/><path d="M1483.9 180 v2" stroke="#777" stroke-width="1"/><path d="M1498.2 180 v2" stroke="#777" stroke-width="1"/><text x="1512.5" y="186" font-size="12" fill="#444" text-anchor="middle" font-family="Liberation Sans">3</text><path d="M1526.8 180 v2" stroke="#777" stroke-width="1"/><path d="M1541.1 180 v2" stroke="#777" stroke-width="1"/><path d="M1555.4 180 v2" stroke="#777" stroke-width="1"/><path d="M1569.8 178 v5" stroke="#444" stroke-width="1.2"/><path d="M1584.1 180 v2" stroke="#777" stroke-width="1"/><path d="M1598.4 180 v2" stroke="#777" stroke-width="1"/><path d="M1612.7 180 v2" stroke="#777" stroke-width="1"/><text x="1627.0" y="186" font-size="12" fill="#444" text-anchor="middle" font-family="Liberation Sans">4</text><path d="M1641.3 180 v2" stroke="#777" stroke-width="1"/><path d="M1655.6 180 v2" stroke="#777" stroke-width="1"/><path d="M1669.9 180 v2" stroke="#777" stroke-width="1"/><path d="M1684.2 178 v5" stroke="#444" stroke-width="1.2"/><path d="M1698.6 180 v2" stroke="#777" stroke-width="1"/><path d="M1712.9 180 v2" stroke="#777" stroke-width="1"/><path d="M1727.2 180 v2" stroke="#777" stroke-width="1"/><text x="1741.5" y="186" font-size="12" fill="#444" text-anchor="middle" font-family="Liberation Sans">5</text><path d="M1755.8 180 v2" stroke="#777" stroke-width="1"/><path d="M1770.1 180 v2" stroke="#777" stroke-width="1"/><path d="M1784.4 180 v2" stroke="#777" stroke-width="1"/><path d="M1798.8 178 v5" stroke="#444" stroke-width="1.2"/><path d="M1813.1 180 v2" stroke="#777" stroke-width="1"/><path d="M1827.4 180 v2" stroke="#777" stroke-width="1"/><path d="M1841.7 180 v2" stroke="#777" stroke-width="1"/><text x="1856.0" y="186" font-size="12" fill="#444" text-anchor="middle" font-family="Liberation Sans">6</text><path d="M1870.3 180 v2" stroke="#777" stroke-width="1"/><path d="M1884.6 180 v2" stroke="#777" stroke-width="1"/><path d="M1898.9 180 v2" stroke="#777" stroke-width="1"/><path d="M1913.2 178 v5" stroke="#444" stroke-width="1.2"/><path d="M1927.6 180 v2" stroke="#777" stroke-width="1"/><rect x="330" y="218" width="14" height="857" fill="#fff"/><path d="M335.2 230.9 h2" stroke="#777" stroke-width="1"/><path d="M333.3 245.2 h5.4" stroke="#444" stroke-width="1.2"/><path d="M335.2 259.6 h2" stroke="#777" stroke-width="1"/><path d="M335.2 273.9 h2" stroke="#777" stroke-width="1"/><path d="M335.2 288.2 h2" stroke="#777" stroke-width="1"/><text x="0" y="0" font-size="12" fill="#444" text-anchor="middle" font-family="Liberation Sans" transform="translate(340.5 302.5) rotate(-90)">3</text><path d="M335.2 316.8 h2" stroke="#777" stroke-width="1"/><path d="M335.2 331.1 h2" stroke="#777" stroke-width="1"/><path d="M335.2 345.4 h2" stroke="#777" stroke-width="1"/><path d="M333.3 359.8 h5.4" stroke="#444" stroke-width="1.2"/><path d="M335.2 374.1 h2" stroke="#777" stroke-width="1"/><path d="M335.2 388.4 h2" stroke="#777" stroke-width="1"/><path d="M335.2 402.7 h2" stroke="#777" stroke-width="1"/><text x="0" y="0" font-size="12" fill="#444" text-anchor="middle" font-family="Liberation Sans" transform="translate(340.5 417.0) rotate(-90)">2</text><path d="M335.2 431.3 h2" stroke="#777" stroke-width="1"/><path d="M335.2 445.6 h2" stroke="#777" stroke-width="1"/><path d="M335.2 459.9 h2" stroke="#777" stroke-width="1"/><path d="M333.3 474.2 h5.4" stroke="#444" stroke-width="1.2"/><path d="M335.2 488.6 h2" stroke="#777" stroke-width="1"/><path d="M335.2 502.9 h2" stroke="#777" stroke-width="1"/><path d="M335.2 517.2 h2" stroke="#777" stroke-width="1"/><text x="0" y="0" font-size="12" fill="#444" text-anchor="middle" font-family="Liberation Sans" transform="translate(340.5 531.5) rotate(-90)">1</text><path d="M335.2 545.8 h2" stroke="#777" stroke-width="1"/><path d="M335.2 560.1 h2" stroke="#777" stroke-width="1"/><path d="M335.2 574.4 h2" stroke="#777" stroke-width="1"/><path d="M333.3 588.8 h5.4" stroke="#444" stroke-width="1.2"/><path d="M335.2 603.1 h2" stroke="#777" stroke-width="1"/><path d="M335.2 617.4 h2" stroke="#777" stroke-width="1"/><path d="M335.2 631.7 h2" stroke="#777" stroke-width="1"/><text x="0" y="0" font-size="12" fill="#444" text-anchor="middle" font-family="Liberation Sans" transform="translate(340.5 646.0) rotate(-90)">0</text><path d="M335.2 660.3 h2" stroke="#777" stroke-width="1"/><path d="M335.2 674.6 h2" stroke="#777" stroke-width="1"/><path d="M335.2 688.9 h2" stroke="#777" stroke-width="1"/><path d="M333.3 703.2 h5.4" stroke="#444" stroke-width="1.2"/><path d="M335.2 717.6 h2" stroke="#777" stroke-width="1"/><path d="M335.2 731.9 h2" stroke="#777" stroke-width="1"/><path d="M335.2 746.2 h2" stroke="#777" stroke-width="1"/><text x="0" y="0" font-size="12" fill="#444" text-anchor="middle" font-family="Liberation Sans" transform="translate(340.5 760.5) rotate(-90)">1</text><path d="M335.2 774.8 h2" stroke="#777" stroke-width="1"/><path d="M335.2 789.1 h2" stroke="#777" stroke-width="1"/><path d="M335.2 803.4 h2" stroke="#777" stroke-width="1"/><path d="M333.3 817.8 h5.4" stroke="#444" stroke-width="1.2"/><path d="M335.2 832.1 h2" stroke="#777" stroke-width="1"/><path d="M335.2 846.4 h2" stroke="#777" stroke-width="1"/><path d="M335.2 860.7 h2" stroke="#777" stroke-width="1"/><text x="0" y="0" font-size="12" fill="#444" text-anchor="middle" font-family="Liberation Sans" transform="translate(340.5 875.0) rotate(-90)">2</text><path d="M335.2 889.3 h2" stroke="#777" stroke-width="1"/><path d="M335.2 903.6 h2" stroke="#777" stroke-width="1"/><path d="M335.2 917.9 h2" stroke="#777" stroke-width="1"/><path d="M333.3 932.2 h5.4" stroke="#444" stroke-width="1.2"/><path d="M335.2 946.6 h2" stroke="#777" stroke-width="1"/><path d="M335.2 960.9 h2" stroke="#777" stroke-width="1"/><path d="M335.2 975.2 h2" stroke="#777" stroke-width="1"/><text x="0" y="0" font-size="12" fill="#444" text-anchor="middle" font-family="Liberation Sans" transform="translate(340.5 989.5) rotate(-90)">3</text><path d="M335.2 1003.8 h2" stroke="#777" stroke-width="1"/><path d="M335.2 1018.1 h2" stroke="#777" stroke-width="1"/><path d="M335.2 1032.4 h2" stroke="#777" stroke-width="1"/><path d="M333.3 1046.8 h5.4" stroke="#444" stroke-width="1.2"/><path d="M335.2 1061.1 h2" stroke="#777" stroke-width="1"/></svg><div class="a" style="left:402px;top:215px;width:1531px;height:862px;border:1px solid #C6C6C6;background:radial-gradient(circle at 797px 424px,#FEFEFB 0px,#FBFBF5 400px,#F6F5E9 540px,#F0EEDC 680px,#EAE6CA 820px,#E6E1C0 950px)"></div><div class="a" style="left:1983px;top:172px;width:16px;height:868px;background:#DADADA"></div><div class="a" style="left:1983px;top:172px;width:16px;height:16px;background:#fff;border:1px solid #C8C8C8"></div><div class="a" style="left:1983px;top:1024px;width:16px;height:16px;background:#fff;border:1px solid #C8C8C8"></div><div class="a" style="left:1983px;top:619px;width:16px;height:18px;background:#fff;border:1px solid #BDBDBD"></div><svg class="a" style="left:1983px;top:172px" width="16" height="910"><path d="M4 11 h8 l-4 -4z M4 857 h8 l-4 4z" fill="#555"/><path d="M4 879 h8 l-4 -5z M4 884 h8 l-4 -5z M4 894 h8 l-4 5z M4 899 h8 l-4 5z" fill="#555"/><path d="M4 885.5 h8 M4 892.5 h8" stroke="#555" stroke-width="0.8"/></svg>
<!-- p_bench -->
<svg class="a" style="left:0;top:0" width="2000" height="1125"><defs>
<filter id="bev" x="-5%" y="-5%" width="110%" height="110%"><feMorphology in="SourceAlpha" operator="erode" radius="2.2" result="e"/><feOffset in="e" dx="-2" dy="-1.6" result="o"/><feComposite in="e" in2="o" operator="out" result="rim"/><feGaussianBlur in="rim" stdDeviation="0.7" result="rb"/><feFlood flood-color="#383838"/><feComposite in2="rb" operator="in" result="rc"/><feMerge><feMergeNode in="SourceGraphic"/><feMergeNode in="rc"/></feMerge></filter>
<linearGradient id="gSlat" x1="0" y1="0" x2="0" y2="1"><stop offset="0" stop-color="#1C1006"/><stop offset="1" stop-color="#140B03"/></linearGradient>
<linearGradient id="gS6" x1="0" y1="0" x2="0" y2="1"><stop offset="0" stop-color="#2E1A06"/><stop offset="1" stop-color="#4A2A08"/></linearGradient>
<linearGradient id="gSeatA" x1="0" y1="0" x2="0" y2="1"><stop offset="0" stop-color="#B06A12"/><stop offset="1" stop-color="#9A5A0E"/></linearGradient>
<linearGradient id="gSeatB" x1="0" y1="0" x2="0.3" y2="1"><stop offset="0" stop-color="#A86210"/><stop offset="1" stop-color="#7A450B"/></linearGradient>
<linearGradient id="gSeatEdge" x1="0" y1="0" x2="0" y2="1"><stop offset="0" stop-color="#5A3A12"/><stop offset="1" stop-color="#6E4C22"/></linearGradient>
</defs><g id="bench"><path d="M781.0 426.0 L1245.0 428.0 L1244.0 434.5 L782.0 433.0Z" fill="#F2A54C"/><path d="M769.0 384.0 L1235.0 392.0 L1245.0 428.0 L781.0 426.0Z" fill="url(#gSlat)"/><path d="M766.0 384.0 L770.0 384.0 L782.0 426.0 L778.0 428.0Z" fill="#E0902C"/><path d="M797.0 483.0 L1259.0 474.0 L1258.0 479.0 L798.0 490.0Z" fill="#F2A54C"/><path d="M784.0 440.0 L1249.0 439.0 L1259.0 474.0 L797.0 483.0Z" fill="url(#gSlat)"/><path d="M781.0 440.0 L785.0 440.0 L798.0 483.0 L794.0 485.0Z" fill="#E0902C"/><path d="M812.0 539.0 L1272.0 517.0 L1271.0 524.0 L813.0 547.0Z" fill="#F2A54C"/><path d="M799.0 497.0 L1261.0 483.0 L1272.0 517.0 L812.0 539.0Z" fill="url(#gSlat)"/><path d="M796.0 497.0 L800.0 497.0 L813.0 539.0 L809.0 541.0Z" fill="#E0902C"/><path d="M828.0 600.0 L1287.0 565.0 L1286.0 570.0 L829.0 607.0Z" fill="#F2A54C"/><path d="M815.0 557.0 L1275.0 529.0 L1287.0 565.0 L828.0 600.0Z" fill="url(#gSlat)"/><path d="M812.0 557.0 L816.0 557.0 L829.0 600.0 L825.0 602.0Z" fill="#E0902C"/><path d="M853.0 654.0 L1303.0 611.0 L1302.0 616.0 L854.0 659.5Z" fill="#F2A54C"/><path d="M832.0 616.0 L1291.0 575.5 L1303.0 611.0 L853.0 654.0Z" fill="url(#gSlat)"/><path d="M829.0 616.0 L833.0 616.0 L854.0 654.0 L850.0 656.0Z" fill="#E0902C"/><path d="M850.0 672.0 L1080.0 646.0 L1280.0 622.5 L1303.0 619.0 L1322.0 652.0 L1280.0 656.0 L1080.0 685.0 L850.0 719.0Z" fill="url(#gS6)"/><path d="M1453.6 640.0 C1460.9 637.2 1474.3 637.2 1484.0 639.0 C1491.4 640.4 1498.4 645.3 1504.8 649.6 C1510.7 653.6 1516.0 658.8 1520.8 664.0 C1523.4 666.8 1526.2 670.1 1527.0 673.6 C1527.8 676.8 1527.6 682.6 1525.6 684.0 C1523.6 685.4 1517.6 684.2 1515.0 682.0 C1509.0 676.9 1505.9 667.7 1500.0 662.0 C1495.6 657.7 1489.9 653.6 1484.0 652.0 C1474.9 649.6 1462.5 653.0 1455.0 650.0 C1452.4 649.0 1451.2 640.9 1453.6 640.0Z" fill="#060606"/><path d="M850.0 717.0 L1080.0 682.0 L1290.0 655.0 L1322.0 651.0 L1322.0 657.0 L1290.0 661.0 L1040.0 692.5 L850.0 727.0Z" fill="#D69A4E"/><path d="M850.0 725.0 L1040.0 692.5 L1290.0 661.0 L1452.5 641.2 L1482.0 647.0 L1482.0 654.0 L1380.0 664.0 L1290.0 679.0 L1040.0 715.0 L850.0 748.0Z" fill="url(#gSeatA)"/><path d="M862.0 745.0 L1040.0 715.0 L1290.0 679.0 L1380.0 664.0 L1482.0 654.0 L1493.6 652.8 L1380.0 670.0 L1290.0 686.0 L1040.0 725.0 L880.0 755.0Z" fill="#1A0F03"/><path d="M1040.0 725.0 L1290.0 686.0 L1380.0 670.0 L1493.6 652.8 L1523.0 675.0 L1380.0 701.0 L1290.0 716.0 L1062.0 762.0Z" fill="url(#gSeatB)"/><path d="M1062.0 762.0 L1290.0 716.0 L1380.0 701.0 L1523.0 675.0 L1521.0 686.4 L1516.0 689.6 L1380.0 713.6 L1290.0 727.0 L1065.0 773.0Z" fill="url(#gSeatEdge)"/><path d="M1062.0 762.0 L1523.0 675.0 L1522.0 677.0 L1063.0 764.5Z" fill="#2A1804"/><path d="M1039.0 725.0 L1044.0 725.0 L1066.0 762.0 L1065.0 774.0 L1061.0 770.0Z" fill="#E8962E"/><g filter="url(#bev)"><path d="M1232.5 395 Q1233 389.5 1239 389.5 L1246 390.5 L1305 576 L1297 582 L1288 571 Z" fill="#060606"/><path d="M1301 578 L1322 652" stroke="#060606" stroke-width="11" fill="none"/><path d="M1296.0 574.0 C1304.4 572.3 1322.0 578.1 1335.0 580.0 C1356.3 583.1 1377.7 588.6 1399.0 589.0 C1416.0 589.3 1433.0 584.5 1450.0 582.0 C1467.4 579.4 1484.6 575.2 1502.0 573.7 C1508.0 573.2 1514.8 573.5 1520.0 576.0 C1525.2 578.5 1529.9 583.8 1533.0 588.8 C1536.5 594.4 1538.8 601.5 1540.0 608.0 C1540.6 611.2 1539.2 614.7 1538.4 618.0 C1537.1 623.3 1536.6 629.4 1533.6 633.6 C1530.2 638.3 1524.5 642.0 1519.2 644.8 C1515.4 646.8 1510.6 648.3 1506.4 648.0 C1502.5 647.7 1498.2 645.5 1495.0 643.0 C1490.7 639.6 1486.9 635.1 1484.0 630.4 C1479.9 623.9 1474.8 615.5 1474.0 609.6 C1473.7 607.7 1479.1 605.9 1480.8 607.0 C1485.1 609.6 1487.8 616.7 1492.0 620.8 C1496.3 625.0 1501.3 630.2 1506.4 632.0 C1508.8 632.9 1512.7 630.9 1514.4 628.8 C1517.5 625.0 1519.7 619.4 1520.8 614.4 C1521.8 609.8 1521.9 604.5 1520.8 600.0 C1519.8 596.0 1517.9 590.4 1514.4 589.0 C1507.3 586.1 1497.4 586.2 1489.0 587.0 C1475.9 588.2 1463.1 592.6 1450.0 595.0 C1433.1 598.1 1416.1 603.0 1399.0 603.3 C1377.6 603.7 1355.9 600.5 1334.7 597.0 C1323.2 595.1 1310.2 592.5 1301.0 587.0 C1297.3 584.8 1293.0 574.6 1296.0 574.0Z" fill="#060606"/><path d="M1300.0 586.0 C1302.0 585.3 1306.5 585.9 1308.0 588.0 C1313.1 595.2 1314.4 606.2 1319.6 614.0 C1324.0 620.6 1329.9 628.1 1336.7 631.0 C1343.2 633.8 1352.9 633.6 1359.5 631.0 C1367.1 628.0 1373.0 619.9 1379.4 614.0 C1384.1 609.6 1387.6 601.3 1392.8 600.0 C1397.4 598.8 1404.5 602.9 1408.8 606.4 C1413.1 609.9 1417.2 615.7 1418.4 620.8 C1419.3 624.7 1417.4 630.0 1415.2 633.6 C1413.1 637.0 1409.3 639.9 1405.6 641.6 C1400.9 643.7 1390.9 645.9 1390.0 645.0 C1389.3 644.3 1398.0 640.2 1400.8 636.8 C1403.7 633.2 1406.9 628.3 1407.2 624.0 C1407.4 620.8 1404.9 616.4 1402.4 614.4 C1400.1 612.6 1395.5 611.6 1392.8 612.8 C1388.1 614.8 1384.3 620.3 1380.0 624.0 C1376.1 627.4 1372.5 631.5 1368.0 633.9 C1361.8 637.2 1354.8 640.6 1348.0 641.0 C1340.6 641.5 1331.5 640.5 1325.3 636.7 C1318.3 632.4 1312.9 624.1 1308.3 616.8 C1303.5 609.2 1299.2 600.2 1297.0 592.0 C1296.5 590.0 1298.4 586.6 1300.0 586.0Z" fill="#060606"/><path d="M1310.0 722.0 C1312.4 718.6 1324.3 718.9 1326.0 722.0 C1328.5 726.5 1324.9 737.6 1322.5 744.8 C1319.9 752.8 1316.1 761.0 1311.0 767.5 C1305.7 774.2 1297.7 778.8 1291.2 784.6 C1286.4 788.8 1277.2 793.5 1277.0 797.4 C1276.8 800.6 1285.7 803.1 1290.0 806.0 C1290.0 806.0 1290.0 806.0 1290.0 806.0 C1290.3 810.0 1290.7 814.0 1291.0 818.0 C1291.0 818.0 1291.0 818.0 1291.0 818.0 C1274.0 813.0 1257.0 808.0 1240.0 803.0 C1240.0 803.0 1240.0 803.0 1240.0 803.0 C1244.7 798.8 1248.8 793.7 1254.0 790.3 C1261.1 785.7 1269.6 783.2 1277.0 779.0 C1282.9 775.6 1289.3 772.3 1294.0 767.5 C1298.7 762.8 1303.2 756.8 1305.4 750.5 C1308.5 741.6 1305.6 728.1 1310.0 722.0Z" fill="#060606"/><path d="M1328.0 724.0 C1328.9 723.3 1339.5 725.4 1345.0 727.0 C1348.8 728.1 1356.7 731.4 1356.0 732.0 C1355.0 732.8 1345.0 732.4 1340.0 731.0 C1335.7 729.8 1327.3 724.6 1328.0 724.0Z" fill="#060606"/><path d="M1504.0 688.0 C1505.4 684.7 1516.7 682.6 1519.0 685.6 C1523.2 691.1 1523.1 704.0 1523.5 713.3 C1523.8 720.4 1523.6 728.2 1521.3 734.7 C1519.3 740.3 1515.4 746.2 1510.7 749.6 C1504.8 753.9 1496.4 755.2 1489.3 758.0 C1482.2 760.9 1474.7 763.1 1468.0 766.7 C1462.6 769.6 1456.8 772.8 1453.0 777.3 C1449.7 781.3 1447.4 787.0 1446.7 792.3 C1445.3 803.4 1445.4 815.2 1446.7 826.4 C1447.5 833.0 1448.9 840.8 1453.0 845.6 C1457.5 850.8 1465.6 853.2 1472.3 856.3 C1482.0 860.7 1492.1 864.1 1502.0 868.0 C1502.0 868.0 1502.0 868.0 1502.0 868.0 C1503.0 869.3 1504.7 870.4 1505.0 872.0 C1505.7 875.1 1505.9 879.2 1505.0 882.0 C1504.6 883.2 1502.3 883.3 1501.0 884.0 C1501.0 884.0 1501.0 884.0 1501.0 884.0 C1482.2 878.7 1460.2 877.0 1444.5 868.0 C1437.9 864.2 1436.1 853.5 1433.9 845.6 C1431.1 835.3 1429.6 824.2 1429.6 813.6 C1429.6 807.8 1432.3 802.2 1433.9 796.5 C1435.9 789.4 1443.2 779.4 1440.3 775.2 C1436.8 770.2 1422.8 772.0 1414.7 768.8 C1406.5 765.6 1397.5 761.9 1391.2 756.0 C1386.1 751.2 1383.7 743.4 1380.5 736.8 C1377.3 730.1 1370.7 720.4 1372.0 716.0 C1372.9 713.1 1384.0 712.1 1387.0 715.0 C1392.6 720.4 1392.6 733.4 1397.6 741.0 C1401.1 746.3 1406.5 752.2 1412.5 753.9 C1422.9 756.9 1435.5 756.3 1446.7 755.0 C1461.1 753.4 1475.9 750.3 1489.3 745.3 C1495.8 742.8 1503.2 738.2 1506.4 732.5 C1509.6 726.8 1508.9 718.2 1508.5 711.2 C1508.1 703.4 1501.9 693.2 1504.0 688.0Z" fill="#060606"/><path d="M1469.6 699.2 C1473.6 699.2 1481.4 700.8 1484.0 704.0 C1486.2 706.7 1485.3 713.0 1484.0 716.8 C1482.7 720.5 1479.3 724.0 1476.0 726.4 C1472.3 729.1 1463.5 733.0 1463.0 732.0 C1462.4 730.9 1470.3 724.4 1472.8 720.0 C1474.7 716.7 1476.9 711.8 1476.0 708.8 C1475.3 706.4 1469.4 706.1 1468.0 704.0 C1467.2 702.9 1468.3 699.2 1469.6 699.2Z" fill="#060606"/><path d="M1404.0 708.0 C1412.3 704.4 1437.9 699.0 1447.0 700.0 C1449.9 700.3 1443.8 710.3 1440.0 712.0 C1433.1 715.0 1423.0 714.9 1415.0 714.0 C1411.0 713.6 1401.6 709.0 1404.0 708.0Z" fill="#060606"/></g><g filter="url(#bev)"><path d="M749.0 392.0 C748.4 389.4 748.6 386.4 749.5 384.0 C750.3 382.0 752.1 380.0 754.0 379.0 C756.0 378.0 758.8 377.6 761.0 378.0 C762.8 378.3 764.9 379.6 766.0 381.0 C767.2 382.6 767.5 385.0 768.0 387.0 C777.2 424.6 784.8 462.7 795.0 500.0 C804.2 533.7 817.1 566.3 826.0 600.0 C829.4 613.0 829.5 626.8 832.0 640.0 C835.8 660.1 840.7 680.0 845.0 700.0 C849.3 720.0 855.7 739.8 858.0 760.0 C860.0 777.1 860.2 794.9 858.0 812.0 C855.8 829.3 851.3 846.8 845.0 863.0 C840.3 875.1 833.5 887.6 825.0 897.0 C820.5 902.0 807.4 903.1 806.0 906.0 C805.1 907.8 814.0 909.3 818.0 911.0 C818.0 911.0 818.0 911.0 818.0 911.0 C820.7 913.3 823.3 915.7 826.0 918.0 C826.0 918.0 826.0 918.0 826.0 918.0 C826.0 923.0 827.0 928.6 826.0 933.0 C825.7 934.3 823.3 934.3 822.0 935.0 C822.0 935.0 822.0 935.0 822.0 935.0 C806.5 927.3 791.0 919.7 775.5 912.0 C775.5 912.0 775.5 912.0 775.5 912.0 C783.7 905.3 792.4 899.2 800.0 892.0 C806.9 885.5 813.7 878.7 819.0 871.0 C823.4 864.7 826.2 857.2 829.0 850.0 C832.2 841.6 836.2 832.9 837.0 824.0 C838.9 802.9 837.6 781.3 837.0 760.0 C836.8 754.0 835.8 747.9 834.7 742.0 C831.5 724.3 827.6 706.7 824.0 689.0 C820.4 671.3 817.0 653.6 813.0 636.0 C810.2 623.9 806.7 612.0 803.6 600.0 C785.4 530.7 766.4 461.4 749.0 392.0Z" fill="#060606"/><path d="M821.0 620.0 C822.8 616.5 833.8 621.8 840.0 623.3 C853.4 626.5 866.4 631.9 880.0 634.0 C897.4 636.8 915.4 638.2 933.0 638.0 C946.4 637.8 959.7 634.6 973.0 632.7 C990.9 630.2 1008.9 625.4 1026.7 624.7 C1033.5 624.5 1041.2 626.3 1046.7 630.0 C1053.7 634.7 1060.3 642.3 1064.0 650.0 C1068.7 659.9 1071.5 672.0 1072.0 683.0 C1072.4 692.0 1070.7 702.4 1066.7 710.0 C1063.6 715.8 1056.7 720.4 1050.7 723.3 C1046.8 725.3 1041.3 725.6 1037.0 724.7 C1031.1 723.4 1024.3 720.9 1020.0 716.7 C1014.2 711.1 1009.7 703.0 1006.7 695.3 C1003.7 687.8 1001.4 677.5 1002.0 671.3 C1002.2 669.5 1007.5 669.8 1009.0 671.3 C1013.1 675.2 1015.2 682.2 1018.7 687.3 C1021.9 692.0 1025.2 697.1 1029.3 700.7 C1031.3 702.4 1034.8 704.1 1037.0 703.3 C1040.0 702.3 1043.6 698.6 1045.0 695.3 C1047.3 689.8 1048.1 682.9 1048.0 676.7 C1047.8 669.1 1047.1 660.6 1044.0 654.0 C1041.8 649.4 1036.7 645.1 1032.0 643.3 C1026.4 641.1 1019.3 641.4 1013.0 642.0 C999.6 643.2 986.3 646.5 973.0 648.7 C959.7 650.9 946.4 654.5 933.0 655.3 C915.4 656.3 897.6 655.2 880.0 654.0 C866.6 653.1 853.4 650.0 840.0 649.0 C835.4 648.7 828.0 653.1 826.0 650.0 C821.7 643.4 818.1 625.4 821.0 620.0Z" fill="#060606"/><path d="M822.0 635.6 C821.6 639.3 829.2 659.9 834.7 671.0 C839.2 680.0 844.8 689.4 852.0 696.0 C857.8 701.3 866.4 705.7 873.8 706.7 C878.4 707.3 884.5 704.4 888.0 701.0 C893.9 695.5 897.3 687.0 902.0 680.0 C905.6 674.6 908.0 667.4 913.0 664.0 C917.6 660.9 925.7 658.7 930.7 660.4 C936.3 662.3 941.9 669.1 945.0 674.7 C947.8 679.7 949.0 686.7 948.4 692.4 C947.8 697.9 945.4 705.0 941.3 708.4 C936.0 712.7 922.0 716.6 920.0 715.6 C918.5 714.8 928.2 707.7 930.7 703.0 C932.9 698.9 934.6 693.4 934.0 689.0 C933.4 684.6 930.4 679.1 927.0 676.4 C924.5 674.4 919.3 673.4 916.4 674.7 C911.7 676.9 908.6 683.5 904.0 687.0 C899.1 690.6 893.7 694.3 888.0 696.0 C883.6 697.3 878.3 697.1 873.8 696.0 C868.8 694.8 863.3 692.5 859.6 689.0 C853.3 683.1 848.4 675.0 843.6 667.6 C840.7 663.1 839.4 657.7 836.4 653.3 C832.2 647.0 822.2 633.4 822.0 635.6Z" fill="#060606"/><path d="M838.0 688.0 C842.2 688.6 854.7 715.3 866.7 723.3 C877.6 730.6 893.3 734.2 906.7 734.0 C924.4 733.8 942.3 726.3 960.0 722.0 C971.2 719.2 982.0 714.5 993.3 712.7 C1000.7 711.5 1008.9 711.1 1016.0 713.0 C1024.3 715.2 1033.0 719.4 1039.7 724.8 C1045.9 729.8 1050.6 737.1 1054.7 744.0 C1057.7 749.1 1060.0 755.3 1061.0 761.0 C1061.5 763.8 1060.6 767.7 1059.0 769.6 C1057.8 771.0 1054.2 771.4 1052.5 770.7 C1050.6 769.9 1049.3 767.0 1048.0 765.0 C1045.0 760.3 1043.3 754.6 1039.7 750.4 C1035.6 745.6 1030.3 740.0 1024.8 738.0 C1021.4 736.8 1016.9 741.0 1013.0 740.7 C1004.2 740.1 995.4 734.9 986.7 735.3 C977.7 735.7 969.1 741.5 960.0 743.3 C942.4 746.8 924.3 752.2 906.7 751.3 C889.9 750.4 871.5 745.3 857.0 738.0 C850.9 734.9 847.5 726.6 845.0 720.0 C841.2 710.0 835.0 687.5 838.0 688.0Z" fill="#060606"/><path d="M1028.0 741.0 C1034.2 742.7 1042.0 752.7 1047.0 760.0 C1051.4 766.4 1054.0 774.4 1056.0 782.0 C1058.0 789.4 1058.5 797.3 1059.0 805.0 C1059.5 811.5 1060.1 818.2 1059.0 824.5 C1057.5 833.3 1056.1 843.1 1051.4 850.3 C1046.7 857.7 1038.3 863.3 1030.8 868.3 C1022.9 873.6 1013.4 876.5 1005.0 881.2 C999.6 884.2 992.5 886.6 989.5 891.5 C985.6 897.8 985.1 906.9 984.3 914.7 C983.4 923.2 983.9 931.9 984.3 940.5 C984.8 951.7 985.4 963.0 987.0 974.0 C987.9 980.1 988.7 987.0 992.0 992.0 C996.3 998.4 1003.1 1004.0 1010.0 1008.0 C1020.5 1014.0 1032.7 1017.3 1044.0 1022.0 C1044.0 1022.0 1044.0 1022.0 1044.0 1022.0 C1044.7 1023.0 1045.8 1023.8 1046.0 1025.0 C1046.5 1028.8 1046.7 1033.3 1046.0 1037.0 C1045.7 1038.3 1044.0 1039.0 1043.0 1040.0 C1043.0 1040.0 1043.0 1040.0 1043.0 1040.0 C1021.7 1030.5 998.5 1023.0 979.2 1011.4 C974.7 1008.7 973.1 1002.2 971.5 997.0 C967.9 985.4 965.0 973.1 963.7 961.0 C962.4 949.1 962.3 936.8 963.7 925.0 C964.9 914.5 973.0 903.4 971.5 894.0 C970.4 887.0 953.8 880.0 956.0 876.0 C959.0 870.5 976.7 869.1 987.0 865.7 C999.9 861.4 1015.2 860.1 1025.6 852.8 C1032.4 848.0 1036.9 837.9 1038.5 829.6 C1040.3 820.3 1037.4 809.8 1036.0 800.0 C1034.6 789.9 1033.5 779.4 1030.0 770.0 C1027.5 763.4 1018.4 757.7 1018.0 752.0 C1017.7 748.1 1024.6 740.1 1028.0 741.0Z" fill="#060606"/><path d="M886.0 775.0 C885.8 781.9 894.9 792.4 899.0 801.3 C904.5 813.2 908.4 826.0 914.7 837.4 C918.8 844.9 923.8 852.2 930.0 858.0 C937.6 865.1 946.9 870.7 956.0 876.0 C961.6 879.3 969.2 885.4 974.0 883.8 C979.5 882.0 989.5 868.6 987.0 865.7 C983.5 861.7 965.4 866.3 956.0 863.0 C948.2 860.3 940.9 854.0 935.3 847.7 C928.9 840.4 924.1 831.0 920.0 822.0 C914.7 810.4 911.6 797.8 907.0 785.8 C904.9 780.4 903.8 771.9 900.0 770.0 C896.8 768.3 886.1 771.5 886.0 775.0Z" fill="#060606"/><path d="M852.0 770.0 C855.3 764.9 866.1 762.6 873.5 761.3 C880.1 760.1 887.7 760.3 894.0 762.6 C903.2 765.9 911.3 773.0 920.0 778.0 C928.5 782.9 936.9 791.0 945.7 792.2 C952.3 793.1 959.5 787.3 966.3 784.5 C975.0 780.9 983.2 774.9 992.0 772.9 C996.1 771.9 1001.8 773.0 1005.0 775.5 C1009.5 779.0 1013.3 785.3 1015.3 791.0 C1017.6 797.3 1019.4 805.3 1018.0 811.6 C1016.8 817.3 1011.9 822.9 1007.5 827.0 C1004.1 830.2 995.6 834.3 994.7 833.5 C993.9 832.7 1000.9 826.3 1002.4 822.0 C1004.4 816.4 1006.0 809.5 1005.0 803.8 C1004.2 799.2 1000.9 793.7 997.2 791.0 C994.0 788.6 988.2 787.0 984.3 788.4 C974.4 792.1 966.0 802.3 956.0 806.4 C951.4 808.3 945.3 807.9 940.5 806.4 C931.5 803.6 923.5 797.4 914.7 793.5 C906.3 789.7 897.8 784.7 889.0 783.2 C882.4 782.1 872.3 782.3 868.3 785.8 C865.4 788.4 867.2 796.4 868.3 801.3 C869.7 807.5 872.3 814.3 876.0 819.3 C878.3 822.4 886.8 825.0 886.4 825.8 C886.0 826.7 876.9 826.6 873.5 824.5 C869.1 821.8 865.6 816.4 863.0 811.6 C859.4 804.9 857.0 797.4 855.0 790.0 C853.3 783.5 849.1 774.5 852.0 770.0Z" fill="#060606"/></g></g></svg>
<!-- p_selpane -->
<svg class="a" style="left:0;top:0" width="2000" height="1125"><path d="M1233 390.5 L1557 418 M1233 390.5 L1202.5 794 L1515 885 L1557 466" stroke="#9A9A9A" stroke-width="1" fill="none"/><rect x="878.5" y="390.5" width="521" height="513.5" fill="none" stroke="#9A9A9A" stroke-width="1" stroke-dasharray="2 2"/><path d="M1139.5 367 V384" stroke="#BDBDBD" stroke-width="1.2"/><path d="M1143.3 361.7 A7 7 0 1 1 1146.7 354.4" stroke="#8E8E8E" stroke-width="4.6" fill="none"/><path d="M1143.3 361.7 A7 7 0 1 1 1146.7 354.4" stroke="#fff" stroke-width="1.8" fill="none"/><path d="M1141.5 353.5 L1155 353.5 L1148 360.5 z" fill="#fff" stroke="#8E8E8E" stroke-width="1.4"/><path d="M1144 356.5 h7" stroke="#fff" stroke-width="2"/><circle cx="878" cy="390" r="5.2" fill="#fff" stroke="#8E8E8E" stroke-width="1.6"/><circle cx="1139" cy="390" r="5.2" fill="#fff" stroke="#8E8E8E" stroke-width="1.6"/><circle cx="1400" cy="390" r="5.2" fill="#fff" stroke="#8E8E8E" stroke-width="1.6"/><circle cx="878" cy="647" r="5.2" fill="#fff" stroke="#8E8E8E" stroke-width="1.6"/><circle cx="1400" cy="647" r="5.2" fill="#fff" stroke="#8E8E8E" stroke-width="1.6"/><circle cx="878" cy="904" r="5.2" fill="#fff" stroke="#8E8E8E" stroke-width="1.6"/><circle cx="1139" cy="904" r="5.2" fill="#fff" stroke="#8E8E8E" stroke-width="1.6"/><circle cx="1400" cy="904" r="5.2" fill="#fff" stroke="#8E8E8E" stroke-width="1.6"/></svg><div class="a" style="left:445px;top:385px;width:260px;height:521px;background:#E6E6E6;border:1px solid #C6C6C6;box-shadow:1px 1px 3px rgba(0,0,0,0.18)"></div><div class="a" style="left:458.7px;top:400.0px;font-size:22px;line-height:1;color:#C43E1C;transform:scaleX(0.983);transform-origin:0 0;">Selection</div>
<svg class="a" style="left:445px;top:385px" width="260" height="200"><path d="M187 22 h10 l-5 6z" fill="#666"/><path d="M231 19 l9 9 M240 19 l-9 9" stroke="#444" stroke-width="1.4"/><rect x="207.5" y="53.5" width="17" height="15" fill="#fff" stroke="#B5B5B5"/><path d="M211 64 h10 l-5 -5z" fill="#555"/><rect x="228.5" y="53.5" width="17" height="15" fill="#fff" stroke="#B5B5B5"/><path d="M232 58 h10 l-5 5z" fill="#555"/><path d="M20 100 l7 -7 v7z" fill="#444"/></svg><div class="a" style="left:459px;top:433px;width:67px;height:25px;background:#fff;border:1px solid #ABABAB"></div><div class="a" style="left:529px;top:433px;width:63px;height:25px;background:#fff;border:1px solid #ABABAB"></div><div class="a" style="left:467.4px;top:438.9px;font-size:13px;line-height:1;color:#444;">Show All</div>
<div class="a" style="left:536.9px;top:438.9px;font-size:13px;line-height:1;color:#444;transform:scaleX(1.043);transform-origin:0 0;">Hide All</div>
<div class="a" style="left:494px;top:532px;width:195px;height:20px;background:#FBCAB2"></div><div class="a" style="left:479.0px;top:476.9px;font-size:13px;line-height:1;color:#444;transform:scaleX(0.934);transform-origin:0 0;">Park Bench</div>
<div class="a" style="left:496.5px;top:496.9px;font-size:13px;line-height:1;color:#444;transform:scaleX(0.930);transform-origin:0 0;">Seat &amp; Back</div>
<div class="a" style="left:496.0px;top:517.0px;font-size:13px;line-height:1;color:#444;transform:scaleX(0.942);transform-origin:0 0;">Right Side</div>
<div class="a" style="left:496.0px;top:537.0px;font-size:13px;line-height:1;color:#444;transform:scaleX(0.946);transform-origin:0 0;">Left Side</div>
<svg class="a" style="left:0;top:0" width="800" height="600"><path d="M672 484 q8 -8 16 0" stroke="#444" stroke-width="1.6" fill="none"/><circle cx="680" cy="484.5" r="1.8" fill="#444"/><path d="M672 504 q8 -8 16 0" stroke="#444" stroke-width="1.6" fill="none"/><circle cx="680" cy="504.5" r="1.8" fill="#444"/><path d="M672 524 q8 -8 16 0" stroke="#444" stroke-width="1.6" fill="none"/><circle cx="680" cy="524.5" r="1.8" fill="#444"/><path d="M672 544 q8 -8 16 0" stroke="#444" stroke-width="1.6" fill="none"/><circle cx="680" cy="544.5" r="1.8" fill="#444"/></svg>
<!-- p_format -->
<div class="a" style="left:1556px;top:114px;width:303px;height:927px;background:#E6E6E6;border:1px solid #C6C6C6;box-shadow:0 0 4px rgba(0,0,0,0.18)"></div><div class="a" style="left:1570.3px;top:128.1px;font-size:21.5px;line-height:1;color:#C43E1C;transform:scaleX(0.989);transform-origin:0 0;">Format Shape</div>
<svg class="a" style="left:1556px;top:114px" width="303" height="930"><path d="M230 22 h10 l-5 5.5z" fill="#666"/><path d="M273.5 18.5 l9.5 9.5 M283 18.5 l-9.5 9.5" stroke="#444" stroke-width="1.5"/><path d="M117.5 50 v18" stroke="#C8C8C8"/><path d="M22 97 l12 -12 l12 12 l-12 12 z" fill="#fff" stroke="#555" stroke-width="1.4"/><path d="M34 85 v-3 a2 2 0 0 1 4 0 v8" stroke="#555" fill="none" stroke-width="1.2"/><path d="M46 97 q5 -2 0 12 q7 -8 -3 -16" fill="#666"/><path d="M75 84 l10 7.5 l-3.8 12 h-12.4 l-3.8 -12 z" fill="#FBE0D6" stroke="#E0553A" stroke-width="1.4"/><path d="M69 104 h12.5 l2 3 h-16.5z" fill="#F6B5A4"/><path d="M110 83.5 h16 M110 81 v5 M126 81 v5 M105 90 h5 M105 105 h5 M107.5 90 v15" stroke="#555" fill="none" stroke-width="1.1"/><rect x="110.5" y="87" width="16" height="18" fill="#666"/><path d="M118.5 89.5 v13 M112.5 96 h12" stroke="#fff" stroke-width="1"/><path d="M15 125.5 H68 L74 117.5 L80 125.5 H289" stroke="#C8C8C8" fill="none" stroke-width="1.2"/><path d="M23 145 l7 -7 v7z M23 636 l7 -7 v7z" fill="#444"/></svg><div class="a" style="left:1828px;top:246px;width:16px;height:774px;background:#DADADA"></div><div class="a" style="left:1828px;top:350px;width:16px;height:655px;background:#fff;border:1px solid #C8C8C8"></div><div class="a" style="left:1828px;top:246px;width:16px;height:16px;background:#fff;border:1px solid #C8C8C8"></div><div class="a" style="left:1828px;top:1004px;width:16px;height:16px;background:#fff;border:1px solid #C8C8C8"></div><svg class="a" style="left:1828px;top:246px" width="16" height="780"><path d="M4 10 h8 l-4 -4z M4 764 h8 l-4 4z" fill="#555"/></svg><div class="a" style="left:1575.6px;top:166.9px;font-size:13px;line-height:1;color:#333;font-weight:bold;transform:scaleX(0.925);transform-origin:0 0;">Shape Options</div>
<div class="a" style="left:1677.7px;top:166.9px;font-size:13px;line-height:1;color:#444;transform:scaleX(0.964);transform-origin:0 0;">Text Options</div>
<div class="a" style="left:1593.7px;top:250.6px;font-size:13px;line-height:1;color:#D24726;font-weight:bold;transform:scaleX(0.969);transform-origin:0 0;">3-D Format</div>
<div class="a" style="left:1593.7px;top:272.4px;font-size:13px;line-height:1;color:#444;transform:scaleX(0.972);transform-origin:0 0;">Top bevel</div>
<div class="a" style="left:1594px;top:286px;width:7px;height:1px;background:#555"></div><div class="a" style="left:1604px;top:294px;width:63px;height:44px;background:#fff;border:1px solid #ABABAB"></div><div class="a" style="left:1698.9px;top:295.6px;font-size:13px;line-height:1;color:#444;transform:scaleX(1.022);transform-origin:0 0;">Width</div>
<div class="a" style="left:1699px;top:309px;width:11px;height:1px;background:#555"></div><div class="a" style="left:1748px;top:294px;width:76px;height:22px;background:#fff;border:1px solid #ABABAB"></div><div class="a" style="left:1754.3px;top:296.4px;font-size:13px;line-height:1;color:#333355;">2 pt</div>
<svg class="a" style="left:1812px;top:294px" width="10" height="22"><path d="M1.5 8.0 h7 l-3.5 -3.5z M1.5 14.0 h7 l-3.5 3.5z" fill="#555"/></svg><div class="a" style="left:1697.9px;top:324.1px;font-size:13px;line-height:1;color:#444;transform:scaleX(1.015);transform-origin:0 0;">Height</div>
<div class="a" style="left:1699px;top:338px;width:8px;height:1px;background:#555"></div><div class="a" style="left:1748px;top:322px;width:76px;height:22px;background:#fff;border:1px solid #ABABAB"></div><div class="a" style="left:1754.3px;top:324.4px;font-size:13px;line-height:1;color:#333355;">2 pt</div>
<svg class="a" style="left:1812px;top:322px" width="10" height="22"><path d="M1.5 8.0 h7 l-3.5 -3.5z M1.5 14.0 h7 l-3.5 3.5z" fill="#555"/></svg><div class="a" style="left:1593.0px;top:352.8px;font-size:13px;line-height:1;color:#444;transform:scaleX(0.987);transform-origin:0 0;">Bottom bevel</div>
<div class="a" style="left:1594px;top:366px;width:7px;height:1px;background:#555"></div><div class="a" style="left:1604px;top:373px;width:63px;height:44px;background:#fff;border:1px solid #ABABAB"></div><div class="a" style="left:1698.9px;top:375.4px;font-size:13px;line-height:1;color:#444;transform:scaleX(1.022);transform-origin:0 0;">Width</div>
<div class="a" style="left:1713px;top:389px;width:7px;height:1px;background:#555"></div><div class="a" style="left:1748px;top:373px;width:76px;height:22px;background:#fff;border:1px solid #ABABAB"></div><div class="a" style="left:1754.3px;top:375.9px;font-size:13px;line-height:1;color:#333355;">2 pt</div>
<svg class="a" style="left:1812px;top:373px" width="10" height="22"><path d="M1.5 8.0 h7 l-3.5 -3.5z M1.5 14.0 h7 l-3.5 3.5z" fill="#555"/></svg><div class="a" style="left:1697.9px;top:403.4px;font-size:13px;line-height:1;color:#444;transform:scaleX(1.015);transform-origin:0 0;">Height</div>
<div class="a" style="left:1718px;top:417px;width:8px;height:1px;background:#555"></div><div class="a" style="left:1748px;top:401px;width:76px;height:22px;background:#fff;border:1px solid #ABABAB"></div><div class="a" style="left:1754.3px;top:403.9px;font-size:13px;line-height:1;color:#333355;">2 pt</div>
<svg class="a" style="left:1812px;top:401px" width="10" height="22"><path d="M1.5 8.0 h7 l-3.5 -3.5z M1.5 14.0 h7 l-3.5 3.5z" fill="#555"/></svg><div class="a" style="left:1593.0px;top:431.4px;font-size:13px;line-height:1;color:#444;">Depth</div>
<div class="a" style="left:1601px;top:445px;width:7px;height:1px;background:#555"></div><div class="a" style="left:1604px;top:452px;width:46px;height:28px;background:#fff;border:1px solid #ABABAB"></div><div class="a" style="left:1698.5px;top:454.9px;font-size:13px;line-height:1;color:#444;transform:scaleX(0.871);transform-origin:0 0;">Size</div>
<div class="a" style="left:1699px;top:469px;width:7px;height:1px;background:#555"></div><div class="a" style="left:1748px;top:452px;width:76px;height:22px;background:#fff;border:1px solid #ABABAB"></div><div class="a" style="left:1754.5px;top:455.4px;font-size:13px;line-height:1;color:#333355;">5 pt</div>
<svg class="a" style="left:1812px;top:452px" width="10" height="22"><path d="M1.5 8.0 h7 l-3.5 -3.5z M1.5 14.0 h7 l-3.5 3.5z" fill="#555"/></svg><div class="a" style="left:1593.4px;top:489.3px;font-size:13px;line-height:1;color:#444;">Contour</div>
<div class="a" style="left:1601px;top:503px;width:7px;height:1px;background:#555"></div><div class="a" style="left:1604px;top:509px;width:46px;height:28px;background:#fff;border:1px solid #ABABAB"></div><div class="a" style="left:1698.5px;top:511.9px;font-size:13px;line-height:1;color:#444;transform:scaleX(0.871);transform-origin:0 0;">Size</div>
<div class="a" style="left:1705px;top:526px;width:5px;height:1px;background:#555"></div><div class="a" style="left:1748px;top:509px;width:76px;height:22px;background:#fff;border:1px solid #ABABAB"></div><div class="a" style="left:1754.5px;top:512.5px;font-size:13px;line-height:1;color:#333355;">0 pt</div>
<svg class="a" style="left:1812px;top:509px" width="10" height="22"><path d="M1.5 8.0 h7 l-3.5 -3.5z M1.5 14.0 h7 l-3.5 3.5z" fill="#555"/></svg><div class="a" style="left:1593.0px;top:546.6px;font-size:13px;line-height:1;color:#444;">Material</div>
<div class="a" style="left:1594px;top:560px;width:9px;height:1px;background:#555"></div><div class="a" style="left:1604px;top:567px;width:63px;height:44px;background:#fff;border:1px solid #ABABAB"></div><div class="a" style="left:1592.9px;top:620.8px;font-size:13px;line-height:1;color:#444;transform:scaleX(1.032);transform-origin:0 0;">Lighting</div>
<div class="a" style="left:1594px;top:634px;width:7px;height:1px;background:#555"></div><div class="a" style="left:1604px;top:641px;width:63px;height:44px;background:#fff;border:1px solid #ABABAB"></div><div class="a" style="left:1699.0px;top:644.0px;font-size:13px;line-height:1;color:#444;transform:scaleX(1.011);transform-origin:0 0;">Angle</div>
<div class="a" style="left:1699px;top:658px;width:8px;height:1px;background:#555"></div><div class="a" style="left:1748px;top:641px;width:76px;height:22px;background:#fff;border:1px solid #ABABAB"></div><div class="a" style="left:1754.5px;top:644.5px;font-size:13px;line-height:1;color:#333355;transform:scaleX(0.990);transform-origin:0 0;">0°</div>
<svg class="a" style="left:1812px;top:641px" width="10" height="22"><path d="M1.5 8.0 h7 l-3.5 -3.5z M1.5 14.0 h7 l-3.5 3.5z" fill="#555"/></svg><div class="a" style="left:1594px;top:692px;width:48px;height:25px;background:#fff;border:1px solid #ABABAB"></div><div class="a" style="left:1602.1px;top:698.5px;font-size:13px;line-height:1;color:#444;transform:scaleX(0.883);transform-origin:0 0;">Reset</div>
<div class="a" style="left:1603px;top:712px;width:8px;height:1px;background:#555"></div><div class="a" style="left:1593.7px;top:736.7px;font-size:13px;line-height:1;color:#D24726;font-weight:bold;transform:scaleX(0.971);transform-origin:0 0;">3-D Rotation</div>
<div class="a" style="left:1593.1px;top:773.0px;font-size:13px;line-height:1;color:#444;transform:scaleX(0.893);transform-origin:0 0;">Presets</div>
<div class="a" style="left:1594px;top:787px;width:7px;height:1px;background:#555"></div><div class="a" style="left:1761px;top:758px;width:63px;height:44px;background:#fff;border:1px solid #ABABAB"></div><div class="a" style="left:1593.7px;top:815.0px;font-size:13px;line-height:1;color:#444;transform:scaleX(0.941);transform-origin:0 0;">X Rotation</div>
<div class="a" style="left:1679px;top:809px;width:76px;height:22px;background:#fff;border:1px solid #ABABAB"></div><div class="a" style="left:1686.2px;top:814.5px;font-size:13px;line-height:1;color:#333355;transform:scaleX(0.890);transform-origin:0 0;">43.9°</div>
<svg class="a" style="left:1743px;top:809px" width="10" height="22"><path d="M1.5 8.0 h7 l-3.5 -3.5z M1.5 14.0 h7 l-3.5 3.5z" fill="#555"/></svg><div class="a" style="left:1765px;top:808px;width:25px;height:24px;background:#fff;border:1px solid #ABABAB"></div><div class="a" style="left:1799px;top:808px;width:25px;height:24px;background:#fff;border:1px solid #ABABAB"></div><div class="a" style="left:1593.7px;top:846.0px;font-size:13px;line-height:1;color:#444;transform:scaleX(0.945);transform-origin:0 0;">Y Rotation</div>
<div class="a" style="left:1679px;top:840px;width:76px;height:22px;background:#fff;border:1px solid #ABABAB"></div><div class="a" style="left:1685.5px;top:845.5px;font-size:13px;line-height:1;color:#333355;transform:scaleX(0.912);transform-origin:0 0;">10.4°</div>
<svg class="a" style="left:1743px;top:840px" width="10" height="22"><path d="M1.5 8.0 h7 l-3.5 -3.5z M1.5 14.0 h7 l-3.5 3.5z" fill="#555"/></svg><div class="a" style="left:1765px;top:839px;width:25px;height:24px;background:#fff;border:1px solid #ABABAB"></div><div class="a" style="left:1799px;top:839px;width:25px;height:24px;background:#fff;border:1px solid #ABABAB"></div><div class="a" style="left:1593.6px;top:877.0px;font-size:13px;line-height:1;color:#444;transform:scaleX(0.954);transform-origin:0 0;">Z Rotation</div>
<div class="a" style="left:1679px;top:871px;width:76px;height:22px;background:#fff;border:1px solid #ABABAB"></div><div class="a" style="left:1685.9px;top:876.5px;font-size:13px;line-height:1;color:#333355;transform:scaleX(0.867);transform-origin:0 0;">356.4°</div>
<svg class="a" style="left:1743px;top:871px" width="10" height="22"><path d="M1.5 8.0 h7 l-3.5 -3.5z M1.5 14.0 h7 l-3.5 3.5z" fill="#555"/></svg><div class="a" style="left:1765px;top:870px;width:25px;height:24px;background:#fff;border:1px solid #ABABAB"></div><div class="a" style="left:1799px;top:870px;width:25px;height:24px;background:#fff;border:1px solid #ABABAB"></div><div class="a" style="left:1593.0px;top:908.0px;font-size:13px;line-height:1;color:#444;transform:scaleX(0.935);transform-origin:0 0;">Perspective</div>
<div class="a" style="left:1679px;top:902px;width:76px;height:22px;background:#fff;border:1px solid #ABABAB"></div><div class="a" style="left:1686.2px;top:907.5px;font-size:13px;line-height:1;color:#333355;transform:scaleX(0.893);transform-origin:0 0;">45°</div>
<svg class="a" style="left:1743px;top:902px" width="10" height="22"><path d="M1.5 8.0 h7 l-3.5 -3.5z M1.5 14.0 h7 l-3.5 3.5z" fill="#555"/></svg><div class="a" style="left:1765px;top:901px;width:25px;height:24px;background:#fff;border:1px solid #ABABAB"></div><div class="a" style="left:1799px;top:901px;width:25px;height:24px;background:#fff;border:1px solid #ABABAB"></div><div class="a" style="left:1594px;top:829px;width:7px;height:1px;background:#555"></div><div class="a" style="left:1594px;top:860px;width:7px;height:1px;background:#555"></div><div class="a" style="left:1594px;top:891px;width:7px;height:1px;background:#555"></div><div class="a" style="left:1604px;top:922px;width:8px;height:1px;background:#555"></div><div class="a" style="left:1594px;top:935px;width:14px;height:14px;background:#fff;border:1px solid #8A8A8A"></div><div class="a" style="left:1611.0px;top:935.0px;font-size:13px;line-height:1;color:#444;transform:scaleX(0.950);transform-origin:0 0;">Keep text flat</div>
<div class="a" style="left:1612px;top:949px;width:7px;height:1px;background:#555"></div><div class="a" style="left:1593.0px;top:963.0px;font-size:13px;line-height:1;color:#444;transform:scaleX(0.980);transform-origin:0 0;">Distance from ground</div>
<div class="a" style="left:1594px;top:977px;width:8px;height:1px;background:#555"></div><div class="a" style="left:1748px;top:959px;width:76px;height:22px;background:#fff;border:1px solid #ABABAB"></div><div class="a" style="left:1754.4px;top:963.5px;font-size:13px;line-height:1;color:#333355;transform:scaleX(0.955);transform-origin:0 0;">-204 pt</div>
<svg class="a" style="left:1812px;top:959px" width="10" height="22"><path d="M1.5 8.0 h7 l-3.5 -3.5z M1.5 14.0 h7 l-3.5 3.5z" fill="#555"/></svg><div class="a" style="left:1594px;top:988px;width:48px;height:25px;background:#fff;border:1px solid #ABABAB"></div><div class="a" style="left:1602.1px;top:994.5px;font-size:13px;line-height:1;color:#444;transform:scaleX(0.883);transform-origin:0 0;">Reset</div>
<div class="a" style="left:1603px;top:1008px;width:8px;height:1px;background:#555"></div><svg class="a" style="left:0;top:0" width="2000" height="1125"><rect x="1613.5" y="300" width="33.5" height="31" rx="5" fill="#8E8E8E"/><path d="M1618 302 h20 l3 3 v13 l-3 3 h-20 l-3 -3 v-13z" fill="#D8D8D8"/><path d="M1615 318 l3 3 h20 l3 -3 v-13 l5 -4 v26 l-4 4 h-27 l-4 -4z" fill="#9A9A9A"/><path d="M1653 314 h7 l-3.5 3.5z" fill="#555"/><rect x="1613.5" y="379" width="33.5" height="31" rx="5" fill="#8E8E8E"/><path d="M1622 386 h20 l3 3 v16 l-3 3 h-20 l-3 -3 v-16z" fill="#DCDCDC"/><path d="M1614 384 l4 -4 h24 l3 4 v2 h-23 l-3 3 v17 l-5 4z" fill="#777"/><path d="M1653 393 h7 l-3.5 3.5z" fill="#555"/><path d="M1615 466 l6 -6 l6 6 l-6 5z" fill="#fff" stroke="#444" stroke-width="1.1"/><path d="M1624 458 q3 3 2 7" stroke="#1E7FD8" stroke-width="1.4" fill="none"/><rect x="1614.5" y="471" width="15" height="3" fill="#fff" stroke="#777" stroke-width="0.8"/><path d="M1636 464 h7 l-3.5 3.5z" fill="#555"/><path d="M1615 522 l6 -6 l6 6 l-6 5z" fill="#fff" stroke="#444" stroke-width="1.1"/><path d="M1624 514 q3 3 2 7" stroke="#1E7FD8" stroke-width="1.4" fill="none"/><rect x="1614" y="527" width="16" height="4" fill="#111"/><path d="M1636 521 h7 l-3.5 3.5z" fill="#555"/><path d="M1615 591 v3 q0 2 3 3 l8 3 q3 1 6 -1 l11 -6 q2 -1 2 -3 v-3 z" fill="#9A9A9A"/><path d="M1616 591 q-2 -2 1 -4 l11 -6 q3 -1.5 6 -0.5 l10 4 q2 1 0 3 l-11 7 q-3 2 -6 1 z" fill="#D2D2D2"/><path d="M1619 589 l10 -5 q2 -1 4 0" stroke="#F4F4F4" stroke-width="1.5" fill="none"/><path d="M1653 588 h7 l-3.5 3.5z" fill="#555"/><path d="M1615 665 v3 q0 2 3 3 l8 3 q3 1 6 -1 l11 -6 q2 -1 2 -3 v-3 z" fill="#9A9A9A"/><path d="M1616 665 q-2 -2 1 -4 l11 -6 q3 -1.5 6 -0.5 l10 4 q2 1 0 3 l-11 7 q-3 2 -6 1 z" fill="#D2D2D2"/><path d="M1619 663 l10 -5 q2 -1 4 0" stroke="#F4F4F4" stroke-width="1.5" fill="none"/><path d="M1653 662 h7 l-3.5 3.5z" fill="#555"/><path d="M1777 770 q0 -3 3 -3 l9 -1 v24 l-10 2 q-2 0 -2 -3z" fill="#D8D8D8"/><path d="M1789 766 l4 2 v23 l-4 1z" fill="#6E6E6E"/><path d="M1811 777 h7 l-3.5 3.5z" fill="#555"/><g transform="translate(1777 820)"><path d="M-4 -7 v14 M-7 -4 q0 -4 4 -4" stroke="#444" fill="none" stroke-width="1" stroke-dasharray="2 1.5"/><path d="M-6 3 h12 M3 0 l3 3 l-3 3 M-6 -1 q2 -6 7 -5" stroke="#2B88D8" fill="none" stroke-width="1.3"/></g><g transform="translate(1811 820)"><path d="M4 -7 v14" stroke="#444" fill="none" stroke-width="1" stroke-dasharray="2 1.5"/><path d="M6 3 h-12 M-3 0 l-3 3 l3 3 M6 -1 q-2 -6 -7 -5" stroke="#2B88D8" fill="none" stroke-width="1.3"/></g><g transform="translate(1777 851)"><path d="M-7 -4 h14" stroke="#444" fill="none" stroke-width="1" stroke-dasharray="2 1.5"/><path d="M-1 -4 v11 M-4 4 l3 3 l3 -3 M3 -2 q0 -5 -5 -5 q-4 0 -5 3" stroke="#2B88D8" fill="none" stroke-width="1.3"/></g><g transform="translate(1811 851)"><path d="M-7 -4 h14" stroke="#444" fill="none" stroke-width="1" stroke-dasharray="2 1.5"/><path d="M1 -4 v11 M-2 4 l3 3 l3 -3 M-5 -2 q0 -5 5 -5 q4 0 5 3" stroke="#2B88D8" fill="none" stroke-width="1.3"/></g><g transform="translate(1777 882)"><circle cx="1" cy="-3" r="2.5" stroke="#444" fill="none" stroke-width="1"/><path d="M6 -1 a6.5 6.5 0 1 1 -11 4 M-6 0 l1 4 l4 -1" stroke="#2B88D8" fill="none" stroke-width="1.3"/></g><g transform="translate(1811 882)"><circle cx="-1" cy="-3" r="2.5" stroke="#444" fill="none" stroke-width="1"/><path d="M-6 -1 a6.5 6.5 0 1 0 11 4 M6 0 l-1 4 l-4 -1" stroke="#2B88D8" fill="none" stroke-width="1.3"/></g><g transform="translate(1777 913)"><path d="M0 -8 v16 M-5 -3 l5 -5 l5 5" stroke="#333" fill="none" stroke-width="1.2"/></g><g transform="translate(1811 913)"><path d="M0 -8 v16 M-5 3 l5 5 l5 -5" stroke="#333" fill="none" stroke-width="1.2"/></g></svg>
<!-- p_status -->
<div class="a" style="left:322px;top:1098px;width:1678px;height:1px;background:#C6C6C6"></div><div class="a" style="left:0;top:1099px;width:2000px;height:23px;background:#F3F2F1"></div><div class="a" style="left:0;top:1122px;width:2000px;height:3px;background:#2B2B2B"></div><div class="a" style="left:8.0px;top:1105.4px;font-size:12.5px;line-height:1;color:#444;transform:scaleX(0.949);transform-origin:0 0;">Slide 40 of 75</div>
<div class="a" style="left:132.5px;top:1105.4px;font-size:12.5px;line-height:1;color:#444;transform:scaleX(0.956);transform-origin:0 0;">English (United States)</div>
<div class="a" style="left:1637px;top:1102px;width:39px;height:20px;background:#C8C6C4"></div><div class="a" style="left:1584.5px;top:1105.4px;font-size:12.5px;line-height:1;color:#444;">Notes</div>
<div class="a" style="left:1937.1px;top:1105.4px;font-size:12.5px;line-height:1;color:#444;transform:scaleX(0.943);transform-origin:0 0;">115%</div>
<svg class="a" style="left:0;top:1097px" width="2000" height="25" fill="none" stroke="#555" stroke-width="1"><path d="M100.5 5.5 h5 v12 h-5z M105.5 5.5 h4 M105.5 17.5 l1.5 2 M109 8 l5 5 M114 8 l-5 5"/><path d="M1568 10 l3 -3 l3 3 M1568.5 13.5 h11 M1568.5 16.5 h9 M1568.5 19.5 h11" /><path d="M1649.5 7.5 h14 v11 h-14z M1652.5 7.5 v11 M1655.5 10.5 h5 v3 h-5z" stroke="#555"/><path d="M1688.5 7.5 h5.5 v4 h-5.5z M1697.5 7.5 h5.5 v4 h-5.5z M1688.5 14.5 h5.5 v4 h-5.5z M1697.5 14.5 h5.5 v4 h-5.5z"/><path d="M1727.5 7.5 h7 v12 h-7z M1734.5 7.5 h7 v12 h-7z M1729 10 h4 M1729 13 h4 M1736 10 h4 M1736 13 h4" /><path d="M1767.5 7.5 h13 M1768.5 7.5 v6 h11 v-6 M1774 13.5 v5 M1771 18.5 h6"/><path d="M1800 12.5 h6" stroke-width="1.5"/><path d="M1810 12.5 h105" stroke="#999"/><path d="M1917 12.5 h7 M1920.5 9 v7" stroke-width="1.5"/><path d="M1980.5 5.5 h14 v14 h-14z M1983 8 l3 3 M1992 8 l-3 3 M1983 17 l3 -3 M1992 17 l-3 -3"/></svg><div class="a" style="left:1862px;top:1104px;width:5px;height:14px;background:#666"></div>
</body></html>
